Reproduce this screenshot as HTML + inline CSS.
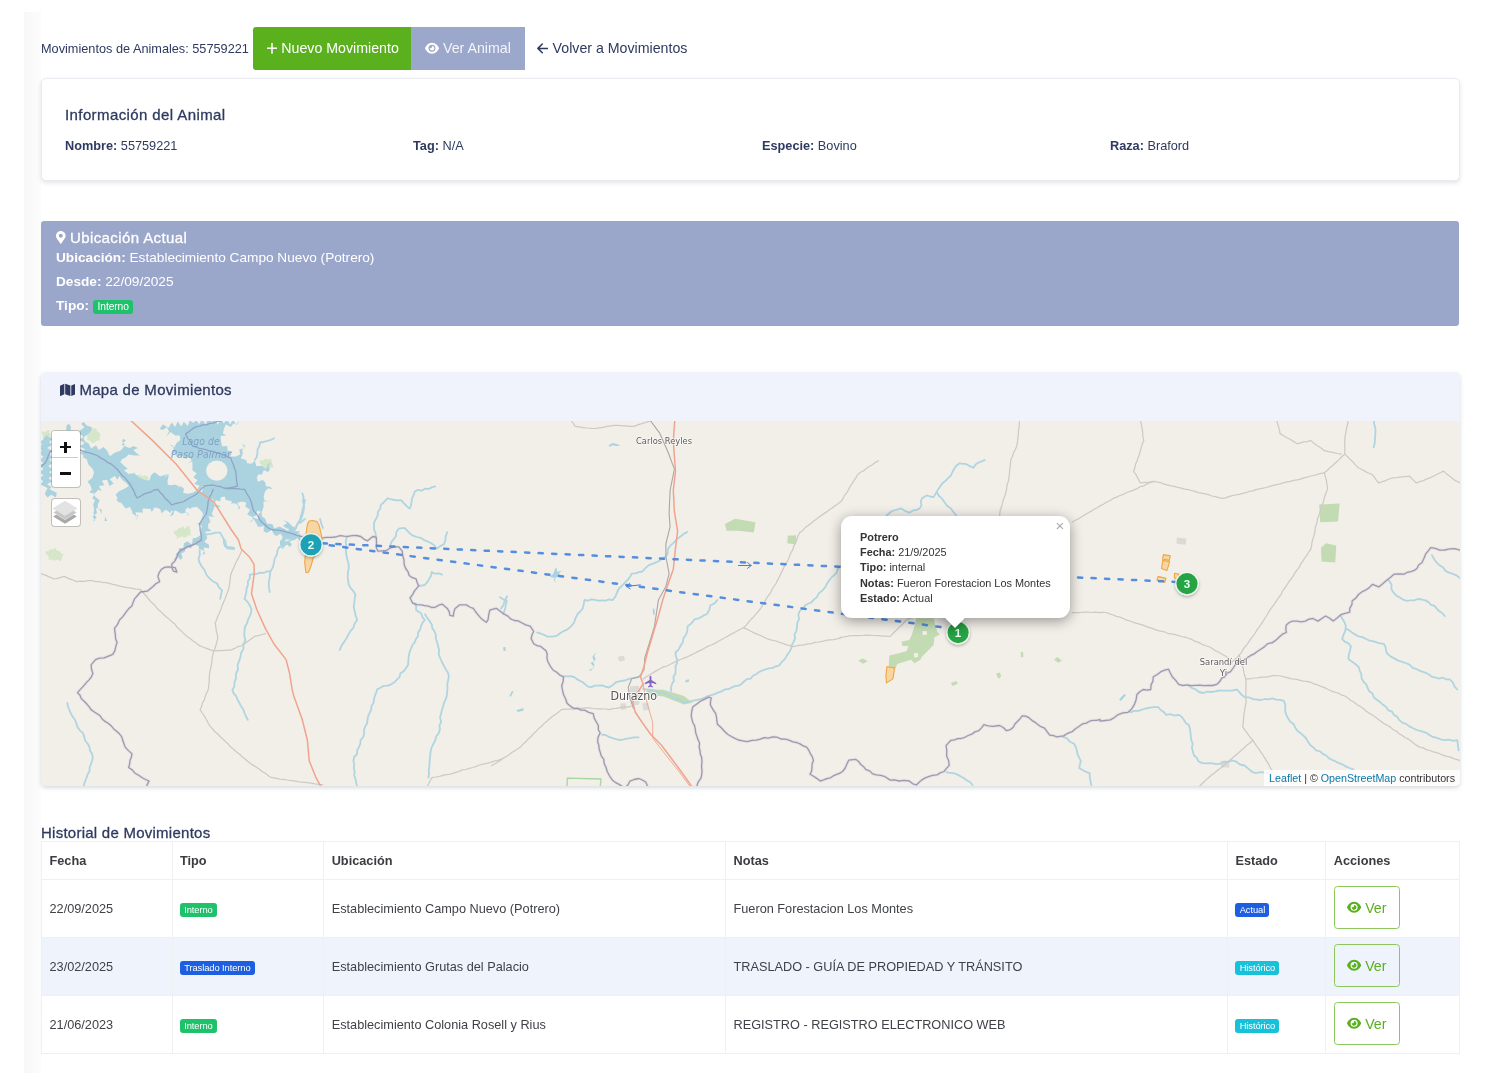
<!DOCTYPE html>
<html lang="es">
<head>
<meta charset="utf-8">
<title>Movimientos de Animales</title>
<style>
*{box-sizing:border-box}
html,body{margin:0;padding:0}
body{width:1500px;height:1086px;background:#fff;position:relative;overflow:hidden;will-change:transform;
 font-family:"Liberation Sans",Arial,sans-serif;font-size:13px;color:#2e3a5f}
.pp{font-family:"Liberation Sans",Arial,sans-serif}
.md{-webkit-text-stroke:.3px currentColor}
#shell{position:absolute;left:24px;top:12px;width:17px;height:1061px;background:linear-gradient(to right,#f8f8f9,#fcfcfd)}
.abs{position:absolute}
/* header */
#hdr-title{left:41px;top:40.500px;font-size:12.730px;line-height:16px;white-space:nowrap;color:#2e3a5f}
.btn{position:absolute;top:27px;height:43px;line-height:43px;color:#fff;white-space:nowrap;font-size:14.2px}
#b1{left:253px;width:158px;background:#5ab01d;border-radius:3px 0 0 3px}
#b2{left:411px;width:114px;background:#9ba8cb}
#b3{left:525px;width:180px;color:#2e3a5f}
/* card */
#card{left:41px;top:78px;width:1418.500px;height:103px;border:1px solid #e9ebf1;border-radius:5px;background:#fff;
 box-shadow:0 2px 4px rgba(40,50,80,.13)}
#card h5{position:absolute;left:23px;top:25.500px;margin:0;font-weight:400;font-size:15px;letter-spacing:.4px;white-space:nowrap;line-height:20px;color:#2e3a5f}
.fld{position:absolute;top:59px;line-height:16px;font-size:12.730px;white-space:nowrap}
/* ubic */
#ubic{left:41px;top:221px;width:1418px;height:105px;background:#9ba7ca;border-radius:3px;color:#fff}
#ubic .t{position:absolute;left:15px;top:7px;font-size:15px;letter-spacing:.4px;line-height:20px;white-space:nowrap}
#ubic .l{position:absolute;left:15px;font-size:13.650px;line-height:18px;white-space:nowrap}
.badge{display:inline-block;position:relative;top:.500px;font-size:9.400px;line-height:14.200px;height:14.200px;padding:0 4.200px;border-radius:3px;color:#fff;vertical-align:middle;letter-spacing:-.1px}
.g{background:#1fc16b}.b{background:#1d5fe0}.c{background:#17c1d9}
/* map card */
#mapcard{left:41px;top:372px;width:1418.500px;height:414px;border-radius:5px;background:#f0f3fb;overflow:hidden;
 box-shadow:0 2px 4px rgba(40,50,80,.18)}
#maphead{position:absolute;left:18px;top:8px;font-size:15px;letter-spacing:.3px;line-height:20px;color:#2e3a5f;white-space:nowrap}
#map{position:absolute;left:0;top:49px;width:1419px;height:365px;background:#f2efe9;overflow:hidden}

#zc{position:absolute;left:10.100px;top:9.100px;width:29.600px;height:57.600px;border:1.600px solid rgba(0,0,0,.2);border-radius:4px;background:#fff;background-clip:padding-box;overflow:hidden}
.zb{position:relative;width:26.400px;background:#fff}

.zb i{position:absolute;background:#111;display:block}
#lc{position:absolute;left:10.100px;top:76.800px;width:29.600px;height:29.700px;border:1.600px solid rgba(0,0,0,.2);border-radius:4px;background:#fff;background-clip:padding-box}
#pop{position:absolute;left:800px;top:95px;width:229px;height:102px;background:#fff;border-radius:11px;box-shadow:0 3px 13px rgba(0,0,0,.38);color:#333}
#pop .pt{position:absolute;left:19px;top:13.500px;font-size:10.900px;line-height:15.450px;white-space:nowrap}
#pop .px{position:absolute;right:4px;top:3px;width:12px;height:14px;font-size:15px;line-height:14px;color:#aaa;text-align:center}
#poptipc{position:absolute;left:896.400px;top:196.900px;width:36px;height:18px;overflow:hidden}
#poptip{position:absolute;left:11px;top:-7px;width:14px;height:14px;background:#fff;transform:rotate(45deg);box-shadow:0 3px 12px rgba(0,0,0,.38)}
#attr{position:absolute;right:0;bottom:0;height:16px;padding:0 5px 0 5px;background:rgba(255,255,255,.8);font-size:10.700px;line-height:16px;color:#333;white-space:nowrap}
/* table */
#hist{left:41px;top:823px;font-size:15px;letter-spacing:.25px;line-height:20px;color:#2e3a5f;white-space:nowrap}
table{position:absolute;left:41px;top:841px;width:1418.300px;table-layout:fixed;border-collapse:collapse;font-size:12.730px;color:#3f4247}
th,td{border:1px solid #eff0f4;padding:0 8px 0 7.500px;text-align:left;vertical-align:middle}
th{height:38px;font-weight:700;color:#3a3c40}
td{height:58px}
tr.s td{background:#eff3fc}
.ver{display:block;position:relative;top:-1px;width:66px;height:43.500px;border:1px solid #8cc65c;border-radius:3.500px;color:#5ab01d;
 line-height:42px;font-size:14.200px;white-space:nowrap}
.ic{position:absolute;display:block}
</style>
</head>
<body>
<div id="shell"></div>

<div id="hdr-title" class="abs">Movimientos de Animales: 55759221</div>
<div id="b1" class="btn pp"><svg class="ic" style="left:13.700px;top:16px" width="10" height="10.700" viewBox="0 0 10 10.700"><path d="M5 0V10.700M0 5.350H10" stroke="#fff" stroke-width="1.500" fill="none"/></svg><span style="position:absolute;left:28.300px">Nuevo Movimiento</span></div>
<div id="b2" class="btn pp"><svg class="ic" style="left:14px;top:15.200px" width="14" height="12.440" viewBox="0 0 576 512"><path fill="#fff" d="M288 32c-80.800 0-145.500 36.800-192.600 80.600C48.600 156 17.300 208 2.500 243.700c-3.300 7.900-3.300 16.700 0 24.600C17.300 304 48.600 356 95.400 399.400C142.500 443.200 207.200 480 288 480s145.500-36.800 192.600-80.600c46.800-43.500 78.100-95.400 93-131.100c3.300-7.900 3.300-16.700 0-24.600c-14.900-35.700-46.200-87.700-93-131.100C433.500 68.800 368.800 32 288 32zM144 256a144 144 0 1 1 288 0 144 144 0 1 1-288 0zm144-64c0 35.300-28.700 64-64 64c-7.100 0-13.900-1.200-20.300-3.300c-5.500-1.800-11.900 1.600-11.700 7.400c.3 6.900 1.300 13.800 3.200 20.700c13.700 51.200 66.400 81.600 117.600 67.900s81.600-66.400 67.900-117.600c-11.100-41.500-47.800-69.400-88.600-71.100c-5.800-.2-9.200 6.100-7.400 11.700c2.100 6.400 3.300 13.200 3.300 20.300z"/></svg><span style="position:absolute;left:32px;color:rgba(255,255,255,.88)">Ver Animal</span></div>
<div id="b3" class="btn pp"><svg class="ic" style="left:12.400px;top:16px" width="11" height="11" viewBox="0 0 11 11"><path d="M10.600 5.400H1M5.300 1L.900 5.400L5.300 9.800" stroke="#2e3a5f" stroke-width="1.500" fill="none" stroke-linecap="round" stroke-linejoin="round"/></svg><span style="position:absolute;left:27.600px">Volver a Movimientos</span></div>

<div id="card" class="abs">
 <h5 class="pp md">Información del Animal</h5>
 <div class="fld" style="left:23px"><b>Nombre:</b> 55759221</div>
 <div class="fld" style="left:371px"><b>Tag:</b> N/A</div>
 <div class="fld" style="left:720px"><b>Especie:</b> Bovino</div>
 <div class="fld" style="left:1068px"><b>Raza:</b> Braford</div>
</div>

<div id="ubic" class="abs">
 <svg class="ic" style="left:15px;top:10.300px" width="9.600" height="12.800" viewBox="0 0 384 512"><path fill="#fff" d="M172.268 501.670C26.970 291.031 0 269.413 0 192 0 85.961 85.961 0 192 0s192 85.961 192 192c0 77.413-26.970 99.031-172.268 309.670-9.535 13.774-29.930 13.773-39.464 0zM192 272c44.183 0 80-35.817 80-80s-35.817-80-80-80-80 35.817-80 80 35.817 80 80 80z"/></svg><div class="t pp md"><span style="margin-left:14px">Ubicación Actual</span></div>
 <div class="l" style="top:28px"><b>Ubicación:</b> Establecimiento Campo Nuevo (Potrero)</div>
 <div class="l" style="top:52px"><b>Desde:</b> 22/09/2025</div>
 <div class="l" style="top:76px"><b>Tipo:</b> <span class="badge g" style="font-size:10.250px;height:14.700px;line-height:14.700px;padding:0 4.700px">Interno</span></div>
</div>

<div id="mapcard" class="abs">
 <svg class="ic" style="left:18.600px;top:11.300px" width="15.600" height="13.870" viewBox="0 0 576 512"><path fill="#2e3a5f" d="M0 117.660v346.320c0 11.320 11.430 19.060 21.940 14.860L160 416V32L20.120 87.950A32.006 32.006 0 0 0 0 117.660zM192 416l192 64V96L192 32v384zM554.060 33.160L416 96v384l139.880-55.950A31.996 31.996 0 0 0 576 394.340V48.020c0-11.320-11.430-19.060-21.940-14.860z"/></svg><div id="maphead" class="pp md"><span style="margin-left:20.400px">Mapa de Movimientos</span></div>
 <div id="map"><!--MAPSVG--><svg width="1419" height="365" viewBox="0 0 1419 365" style="position:absolute;left:0;top:0">
<rect width="1419" height="365" fill="#f2efe9"/>
<g fill="#c3dbb3"><path d="M875.3 197.2 L892.6 197.2 L896.1 210.2 L898.7 213.7 L893.5 216.3 L892.6 224.1 L887.4 229.3 L883.9 232.7 L880.5 236.2 L879.6 238.8 L873.5 242.3 L870.1 238.8 L856.2 243.1 L854.5 247.5 L847.5 247.5 L848.4 234.5 L858.8 231.9 L865.7 230.1 L867.5 224.9 L861.4 224.9 L860.5 220.6 L868.3 218.9 L870.9 213.7 L873.5 205.0Z"/><path d="M683.9 102.9 L694.1 97.8 L714.5 101.2 L712.8 111.4 L697.5 109.7 L685.6 109.7Z"/><path d="M746.9 114.8 L755.4 114.2 L754.7 123.4 L746.2 122.3Z"/><path d="M817.2 239.7 L821.5 237.6 L826.7 240.0 L822.4 242.8Z"/><path d="M909.9 261.9 L915.5 260.1 L916.9 262.5 L911.7 265.1Z"/><path d="M955.0 252.7 L958.8 251.5 L960.2 255.3 L957.6 258.0Z"/><path d="M979.6 231.0 L982.0 230.7 L982.4 235.9 L980.1 236.2Z"/><path d="M1013.1 238.8 L1016.5 235.9 L1020.9 239.7 L1017.4 241.7Z"/><path d="M605.5 268.2 L622.5 268.8 L643.0 275.0 L651.5 281.8 L643.0 283.5 L622.5 275.6 L605.5 273.3Z"/><path d="M1278.2 83.5 L1298.7 82.5 L1297.0 100.5 L1279.2 101.2Z"/><path d="M1279.9 126.8 L1285.0 122.3 L1295.3 124.4 L1294.2 141.4 L1280.6 140.4Z"/></g>
<g fill="#d6e6c9"><path d="M4.1 130.2 L7.0 130.2 L9.2 128.3 L12.1 128.6 L14.3 126.8 L15.6 129.5 L18.7 130.1 L20.2 132.5 L22.8 133.6 L21.0 135.5 L20.8 138.2 L19.4 140.4 L16.7 138.5 L13.5 139.7 L10.6 138.4 L7.5 138.7 L7.7 135.3 L5.0 133.1Z"/><path d="M140.4 108.0 L143.6 107.8 L146.0 105.6 L148.9 104.6 L148.3 107.4 L150.0 109.7 L149.2 112.4 L150.6 114.8 L147.5 113.9 L145.0 116.2 L142.1 116.5 L142.1 113.6 L140.8 110.9Z"/><path d="M218.8 39.9 L221.8 40.0 L224.7 38.8 L227.8 39.2 L230.7 38.2 L230.5 41.2 L231.9 43.8 L232.4 46.7 L229.3 46.6 L226.4 47.7 L223.3 46.8 L220.5 48.4 L221.2 45.3 L219.1 42.8Z"/><path d="M45.7 8.3 L48.8 8.7 L51.9 7.4 L55.0 7.4 L56.7 10.8 L59.7 13.0 L58.7 16.2 L58.7 19.5 L55.9 19.5 L53.8 21.5 L51.3 22.3 L49.0 19.7 L45.7 18.6 L46.6 16.0 L45.4 13.5 L46.9 10.9Z"/><path d="M0.9 10.2 L3.8 10.9 L6.5 9.5 L9.3 9.3 L8.3 12.2 L10.0 14.9 L10.2 17.7 L7.4 16.5 L4.6 17.8 L1.8 17.7 L2.3 15.1 L1.0 12.7Z"/><path d="M97.9 54.1 L100.7 54.9 L103.6 54.4 L106.3 55.0 L108.2 58.7 L104.4 59.0 L101.7 61.5 L97.9 58.7Z"/><path d="M132.5 109.9 L135.5 109.6 L137.6 107.1 L140.5 106.5 L142.9 104.7 L142.8 107.7 L145.4 109.3 L146.3 111.7 L143.1 112.4 L141.3 115.4 L138.1 116.2 L135.9 118.6 L136.0 115.2 L133.4 112.9Z"/><path d="M219.1 38.9 L221.9 39.5 L224.3 37.7 L227.1 38.8 L229.5 37.1 L228.7 40.3 L230.9 42.9 L231.3 45.8 L228.5 45.2 L226.1 46.8 L223.3 46.3 L220.9 47.5 L221.7 44.4 L219.5 41.8Z"/></g>
<g fill="#dcdad6"><path d="M576.7 235.9 L582.8 234.6 L584.1 239.4 L578.1 240.6Z"/><path d="M589.0 265.6 L597.7 264.7 L600.3 273.5 L597.7 284.0 L591.6 284.0 L588.1 277.0Z"/><path d="M601.2 282.2 L607.3 281.9 L608.6 288.9 L602.6 289.6Z"/><path d="M579.3 282.6 L584.6 282.2 L585.1 288.3 L579.9 288.9Z"/><path d="M1135.8 116.5 L1145.3 117.6 L1144.7 123.7 L1135.5 122.7Z"/><path d="M1179.4 339.7 L1187.9 339.7 L1188.6 346.5 L1180.1 346.5Z"/></g>
<g fill="#aad3df"><path d="M-1.0 20.5 L1.8 19.1 L4.6 14.9 L8.3 13.0 L10.7 12.1 L5.7 15.1 L11.5 18.1 L8.2 21.1 L11.0 24.1 L6.2 27.1 L11.6 30.1 L8.5 33.1 L11.1 36.1 L8.5 39.1 L11.5 42.1 L7.2 45.1 L11.2 48.2 L8.3 51.2 L11.4 54.2 L7.5 57.2 L11.6 60.2 L5.9 63.2 L10.7 66.2 L8.3 68.1 L12.1 69.9 L15.8 71.8 L14.9 76.5 L10.2 73.7 L6.5 76.5 L3.7 72.7 L6.6 67.1 L0.9 64.3 L-1.0 63.4 L2.2 60.3 L-1.7 57.3 L2.5 54.2 L-1.8 51.1 L2.5 48.1 L-1.6 45.0 L2.4 41.9 L-1.7 38.9 L2.5 35.8 L-1.5 32.7 L0.9 29.7 L-1.9 26.6 L1.0 23.5Z"/><path d="M25.1 9.3 L25.6 4.6 L27.9 2.7 L29.8 5.5 L29.8 9.3Z"/><path d="M39.1 9.3 L43.4 6.5 L40.1 2.7 L42.9 0.9 L45.7 4.6 L51.3 6.5 L49.4 11.1 L45.7 13.9 L42.5 16.6 L43.8 20.5 L47.5 22.3 L50.2 27.5 L55.0 24.2 L57.8 28.9 L62.5 26.1 L66.2 29.8 L68.8 35.3 L73.7 31.7 L79.3 29.8 L82.1 27.0 L83.7 23.4 L81.1 20.5 L82.1 17.7 L84.9 19.5 L80.4 23.5 L85.8 26.1 L88.6 27.0 L92.3 25.1 L97.0 27.0 L92.3 28.9 L95.1 31.7 L98.9 34.5 L93.3 34.5 L87.7 33.5 L84.9 36.3 L81.1 38.2 L79.3 41.0 L83.0 44.7 L86.7 47.5 L83.0 49.4 L87.7 53.1 L92.3 52.2 L97.0 55.0 L101.7 53.1 L97.3 54.2 L97.9 58.7 L96.3 63.9 L101.7 64.3 L106.4 64.4 L106.3 59.7 L111.2 59.0 L111.0 54.1 L113.8 51.3 L118.5 55.0 L123.1 56.9 L127.8 53.1 L126.9 58.7 L125.0 63.2 L129.7 64.3 L134.3 63.4 L139.0 66.2 L135.7 69.5 L139.8 72.7 L135.4 76.0 L139.5 79.3 L136.7 82.5 L139.8 85.8 L134.1 89.1 L139.0 92.3 L139.7 87.0 L134.3 87.7 L130.0 88.0 L129.7 92.3 L125.0 88.6 L120.3 92.3 L119.5 88.3 L115.7 86.7 L110.0 86.7 L111.0 92.3 L111.1 87.6 L106.3 87.7 L101.5 87.5 L101.7 92.3 L97.0 88.6 L92.8 91.3 L94.2 96.1 L94.9 92.2 L91.4 90.5 L88.6 85.8 L84.9 87.7 L81.1 83.0 L77.4 78.3 L74.6 73.7 L78.3 69.9 L83.0 68.1 L87.7 65.3 L85.8 62.5 L81.1 58.7 L78.3 55.0 L76.5 58.7 L73.7 55.0 L68.7 58.2 L72.7 62.5 L68.7 64.8 L70.9 69.0 L68.1 64.3 L66.2 58.7 L60.8 59.5 L63.4 64.3 L57.8 65.0 L60.6 69.9 L57.1 68.7 L54.5 71.9 L51.3 71.8 L55.0 76.5 L58.7 79.3 L56.9 83.0 L56.6 87.3 L60.6 88.6 L60.6 93.3 L64.3 96.1 L66.2 100.0 L63.4 100.0 L64.3 95.7 L60.6 93.3 L58.7 88.6 L55.0 86.7 L55.9 92.3 L51.5 95.3 L54.1 100.0 L52.2 100.0 L55.6 96.4 L52.4 92.4 L53.1 88.6 L52.2 83.0 L54.1 79.3 L51.3 77.4 L53.8 72.6 L48.5 71.8 L50.8 68.3 L49.4 64.3 L46.6 60.6 L51.3 56.9 L53.1 51.3 L51.3 47.5 L47.5 43.8 L45.7 38.2 L41.9 36.3 L39.6 38.2 L42.8 34.9 L39.0 31.8 L44.4 28.5 L38.6 25.4 L43.8 22.1 L38.5 18.9 L42.5 15.6 L38.2 12.5Z"/><path d="M75.3 78.7 L77.8 76.2 L77.0 72.7 L82.1 75.6 L82.5 69.2 L85.7 68.3 L89.3 66.4 L87.1 62.2 L92.4 61.0 L89.6 56.5 L95.8 55.6 L92.6 51.0 L93.4 55.4 L97.8 56.2 L103.0 58.8 L108.4 59.7 L109.9 54.5 L113.4 51.0 L111.3 56.2 L116.9 56.2 L122.1 54.5 L127.3 52.7 L123.8 55.8 L126.4 59.7 L126.9 64.2 L130.7 66.6 L135.9 69.2 L139.7 65.6 L135.1 63.1 L139.4 64.9 L142.9 67.5 L142.2 71.7 L146.3 72.7 L151.5 71.8 L155.9 69.2 L161.0 72.1 L161.9 65.7 L165.4 64.9 L167.7 69.0 L172.3 68.3 L167.7 71.8 L173.0 75.3 L169.9 78.7 L172.7 82.2 L169.1 85.7 L172.3 89.1 L166.5 90.2 L167.1 96.1 L164.1 93.1 L161.1 96.1 L162.0 92.2 L159.3 89.1 L155.9 85.7 L150.0 86.7 L150.7 92.6 L150.2 88.3 L146.3 86.5 L143.8 90.0 L147.5 92.8 L147.2 96.1 L145.9 91.2 L140.3 92.8 L137.7 90.0 L133.4 89.4 L132.3 94.1 L129.0 95.2 L132.0 90.1 L125.8 89.6 L124.7 86.5 L119.5 89.1 L120.5 84.6 L115.3 83.7 L114.3 80.5 L111.0 83.2 L112.8 87.7 L110.8 90.9 L108.9 86.2 L103.9 85.7 L99.7 86.9 L100.4 91.5 L94.1 91.2 L96.7 97.1 L94.3 99.5 L97.5 94.6 L91.5 92.8 L90.9 89.1 L89.6 83.0 L83.9 85.7 L82.5 81.6 L77.8 81.5Z"/><path d="M118.6 7.7 L122.1 3.3 L127.3 7.0 L130.7 1.6 L134.1 6.0 L136.8 0.5 L140.2 5.4 L142.9 0.7 L146.6 5.1 L148.9 -0.7 L152.3 2.0 L155.0 -1.0 L158.1 3.0 L161.2 -1.7 L164.3 3.2 L167.4 -1.9 L170.5 0.8 L173.6 -1.6 L176.7 3.8 L179.8 -1.4 L182.9 2.3 L186.0 -1.8 L189.0 3.6 L192.1 -1.7 L195.2 3.9 L198.3 -1.0 L196.6 3.3 L192.4 2.6 L189.7 5.9 L184.8 3.5 L182.7 8.5 L182.0 12.4 L185.3 14.6 L179.6 15.0 L180.1 20.7 L181.3 25.5 L186.2 25.0 L186.7 29.7 L191.4 30.2 L189.2 35.4 L194.9 35.4 L199.3 33.3 L198.3 28.5 L203.6 27.1 L200.9 22.4 L204.4 25.0 L201.3 28.3 L201.8 32.8 L199.8 37.6 L205.3 38.9 L206.1 42.3 L210.6 42.7 L213.9 39.7 L215.3 45.1 L220.9 44.9 L225.1 48.0 L227.1 42.6 L230.4 42.3 L227.3 44.5 L229.0 48.5 L226.9 51.0 L222.9 48.9 L220.8 53.5 L217.4 53.6 L215.7 56.2 L216.9 60.7 L221.8 59.0 L224.3 61.4 L225.0 65.3 L229.3 65.7 L231.3 68.3 L227.3 67.2 L224.3 70.1 L222.6 75.3 L223.5 79.6 L227.8 80.5 L222.5 80.4 L222.6 85.7 L220.9 90.9 L216.2 89.8 L214.7 94.8 L211.3 96.1 L206.1 93.5 L209.0 88.7 L204.4 85.7 L205.1 81.5 L200.9 80.5 L196.0 81.9 L199.3 86.5 L197.5 89.1 L197.5 84.8 L194.0 82.2 L190.4 82.4 L188.8 85.7 L191.0 80.2 L184.8 79.0 L183.6 75.3 L179.7 76.5 L179.3 80.5 L175.3 79.3 L172.3 82.2 L172.6 78.6 L169.0 76.9 L170.5 72.7 L166.1 71.5 L165.4 68.3 L161.9 64.7 L159.1 69.7 L155.9 69.2 L158.5 64.5 L153.3 63.1 L156.4 59.2 L152.4 56.2 L155.7 52.4 L151.3 49.3 L151.5 45.8 L151.3 40.6 L146.3 42.3 L150.7 39.7 L148.4 36.1 L144.6 38.0 L140.8 34.7 L135.9 36.3 L134.4 32.0 L129.9 32.8 L132.5 28.5 L132.1 24.5 L128.1 24.1 L133.2 26.3 L135.9 21.5 L139.4 18.9 L138.7 14.5 L134.2 14.6 L129.5 10.9 L125.5 15.5 L128.1 10.3 L125.8 6.4 L121.6 9.0Z"/><path d="M220.9 90.9 L220.8 95.2 L224.3 97.8 L226.1 102.7 L231.3 103.0 L233.4 107.5 L238.4 105.5 L241.7 107.3 L247.3 110.0 L248.6 103.9 L252.1 106.5 L254.5 110.2 L259.0 109.9 L256.6 113.4 L260.0 116.9 L259.0 120.3 L256.3 117.0 L252.6 119.6 L249.5 118.6 L244.2 118.6 L245.1 123.8 L241.7 128.1 L239.1 125.5 L235.6 126.4 L241.7 126.2 L239.9 120.3 L241.7 116.0 L239.5 112.6 L235.7 115.0 L233.0 113.4 L230.6 109.1 L225.8 111.9 L222.6 109.9 L222.9 105.0 L217.3 106.0 L215.7 103.0 L212.7 98.0 L207.9 101.3 L211.7 100.0 L211.3 96.1 L216.7 98.3 L217.5 92.2Z"/><path d="M172.3 82.2 L175.2 86.3 L180.1 85.7 L174.4 83.2 L172.3 89.1 L170.6 92.9 L173.2 96.1 L167.5 95.2 L169.5 101.0 L167.1 103.0 L167.2 107.3 L170.6 109.9 L164.2 110.8 L166.3 116.9 L163.5 120.9 L168.0 123.7 L168.0 127.3 L162.5 126.4 L164.0 132.5 L161.1 134.2 L163.3 129.8 L158.0 128.1 L157.6 124.7 L152.9 123.6 L149.8 127.3 L144.9 125.8 L143.7 130.7 L140.2 132.4 L141.7 136.7 L139.4 139.1 L135.9 134.5 L132.5 139.1 L136.4 137.3 L134.7 133.0 L138.1 131.0 L137.7 127.3 L142.2 127.1 L143.1 122.2 L146.3 120.3 L150.9 123.4 L151.8 117.2 L155.0 116.9 L159.0 114.6 L159.3 109.9 L161.0 104.8 L155.9 103.0 L160.1 100.8 L161.1 96.1 L165.2 94.8 L165.1 90.1 L169.6 89.2 L169.3 84.4Z"/><path d="M239.0 107.0 L244.0 108.0 L246.3 113.4 L251.0 110.0 L254.1 114.7 L259.0 112.0 L259.0 116.0 L255.5 111.5 L251.0 115.0 L248.0 111.2 L244.0 114.0 L239.0 113.0 L242.0 110.0Z"/><path d="M242.0 99.0 L247.0 101.0 L251.0 105.0 L255.0 107.0 L253.0 110.0 L251.2 105.5 L247.0 108.0 L242.0 105.0 L246.0 102.0Z"/><path d="M239.0 119.0 L242.8 121.4 L247.0 120.0 L251.0 123.0 L249.0 126.0 L246.3 123.5 L243.0 125.0 L239.0 124.0Z"/><path d="M547.8 249.0 L553.4 246.6 L549.6 242.0 L553.1 240.0 L551.3 235.9 L553.1 233.2 L555.7 231.5 L553.1 234.7 L554.8 238.5 L552.2 240.9 L553.5 244.4 L552.2 247.2 L549.6 249.9Z"/><path d="M462.1 226.2 L464.4 225.9 L464.7 229.7 L462.6 230.1Z"/><path d="M468.2 275.2 L470.9 270.0 L472.6 270.3 L470.0 275.6Z"/><path d="M475.2 289.2 L482.2 287.1 L482.6 289.6 L477.0 291.0Z"/><path d="M644.1 259.8 L647.6 258.1 L648.1 260.4 L644.9 261.6Z"/><path d="M611.7 187.7 L613.5 187.4 L613.8 193.3 L612.1 193.7Z"/><path d="M508.6 155.8 L512.2 153.0 L513.9 148.3 L515.6 146.2 L516.1 150.9 L520.3 149.4 L517.8 153.0 L521.4 155.8 L516.5 155.8 L512.4 158.2 L515.0 162.2 L513.5 156.9Z"/><path d="M567.7 24.2 L571.5 22.0 L575.8 22.9 L579.6 24.6 L575.8 25.0 L571.5 24.2 L568.3 25.9Z"/><path d="M1078.1 278.6 L1083.2 273.0 L1085.0 274.0 L1079.9 280.1Z"/></g>
<g fill="#f2efe9"><path d="M186.5 49.6 L185.7 53.5 L183.4 56.7 L179.9 58.9 L175.8 59.7 L171.7 58.9 L168.2 56.7 L165.9 53.5 L165.1 49.6 L165.9 45.8 L168.2 42.5 L171.7 40.3 L175.8 39.6 L179.9 40.3 L183.4 42.5 L185.7 45.8Z"/><path d="M881.3 210.2 L885.7 209.9 L886.0 213.7 L881.7 214.0Z"/><path d="M872.7 232.4 L876.7 231.7 L877.3 235.9 L873.2 236.5Z"/></g>
<g fill="none" stroke="#afd5e1" stroke-linejoin="round" stroke-linecap="round" ><path d="M255.0 107.0 L256.5 102.8 L259.0 99.0 L259.9 95.0 L261.1 91.0 L262.0 87.0 L263.1 83.0 L264.0 79.0" stroke-width="1.8"/><path d="M259.0 102.0 L264.0 98.0" stroke-width="1.8"/><path d="M279.0 98.0 L280.3 102.6 L282.0 107.0" stroke-width="1.8"/><path d="M334.6 116.5 L334.7 112.5 L333.1 108.6 L332.9 104.6 L333.3 101.0 L335.1 97.8 L336.7 94.5 L336.9 90.8 L339.3 87.8 L339.7 84.2 L343.2 80.8 L346.5 77.4 L351.0 78.5 L355.5 79.4 L360.1 79.1 L362.7 82.1 L365.6 85.0 L368.7 87.6 L370.1 84.3 L370.5 80.7 L371.2 77.2 L372.6 73.9 L373.8 70.5 L377.0 68.8 L380.8 69.7 L383.9 67.7 L387.6 68.0 L390.8 66.4 L394.2 65.4" stroke-width="1.8"/><path d="M349.1 125.0 L350.3 121.3 L352.6 118.1 L355.1 115.0 L355.4 110.8 L357.8 107.7 L363.0 106.8 L366.0 109.3 L368.6 112.2 L371.7 114.6 L376.0 116.0 L380.3 117.2 L384.5 119.7 L389.0 121.5 L392.9 124.1 L395.9 127.6 L399.2 125.1 L402.9 123.3 L404.4 119.3 L404.7 115.1 L406.3 111.1" stroke-width="1.8"/><path d="M378.6 164.9 L383.8 164.0 L386.3 161.2 L388.1 157.9 L390.1 154.7 L390.7 151.0 L394.0 152.7 L397.8 152.3 L401.1 153.6" stroke-width="1.8"/><path d="M305.8 116.3 L304.7 120.9 L305.3 125.6 L304.9 130.2 L305.4 134.3 L306.3 138.4 L307.5 142.3 L307.8 147.0 L306.9 151.6 L306.7 156.2 L307.1 159.8 L307.7 163.3 L309.3 166.6 L312.2 169.9 L314.5 173.5 L313.7 177.6 L313.4 181.6 L312.7 185.7 L313.7 190.2 L314.7 194.7 L316.2 199.0 L313.6 202.6 L312.4 206.8 L309.5 209.8 L307.6 213.4 L305.6 217.0 L303.2 220.9 L300.5 224.6 L298.8 229.0" stroke-width="1.8"/><path d="M261.3 72.3 L262.6 76.0 L262.0 79.9 L262.8 83.7 L263.0 87.6 L262.2 91.2 L261.2 94.7 L260.0 98.1 L257.9 101.2 L255.6 104.6 L254.2 108.5 L251.1 111.4" stroke-width="1.8"/><path d="M250.3 119.0 L245.8 121.2 L241.7 124.2 L238.4 126.1 L236.5 129.4 L235.9 133.6 L233.7 137.4 L233.0 141.5 L231.9 146.1 L229.5 150.2 L226.0 150.5 L222.7 151.9 L219.0 151.6 L215.7 152.8 L208.7 153.7 L208.9 157.3 L206.9 160.5 L207.0 164.1 L205.5 167.4 L205.4 171.0 L204.4 174.5 L203.5 177.9 L206.6 180.9 L208.8 184.4 L210.5 188.3 L210.0 192.0 L208.7 195.5 L207.0 198.7 L206.1 202.3 L204.1 205.5 L203.5 209.1 L203.3 214.4 L204.4 219.5 L202.3 223.3 L202.4 227.9 L200.1 231.7 L199.5 235.9 L198.2 239.9 L196.6 243.8 L197.0 248.5 L194.9 253.0 L194.9 257.7 L193.4 261.3 L193.4 265.4 L191.4 268.9 L192.6 272.5 L195.3 275.2 L196.5 278.7 L198.4 281.9 L200.0 285.2 L202.2 288.3 L203.5 291.9 L205.0 295.5 L206.8 298.8" stroke-width="1.8"/><path d="M229.5 150.2 L228.9 153.7 L228.6 157.2 L227.8 160.6 L227.8 165.8 L228.7 171.0" stroke-width="1.8"/><path d="M182.7 119.0 L183.0 122.6 L184.5 125.9 L188.8 126.1 L193.1 126.8" stroke-width="1.8"/><path d="M158.5 129.4 L158.9 133.4 L157.6 137.5 L158.5 141.5 L160.8 145.6 L163.7 149.3 L165.4 153.7 L168.3 157.2 L171.7 160.2 L175.8 162.3 L177.9 166.2 L181.0 169.3 L180.0 173.6 L179.3 177.9" stroke-width="1.8"/><path d="M373.4 182.2 L375.1 185.5 L375.1 189.1 L380.3 192.6 L381.4 196.2 L383.8 199.0 L381.5 201.8 L380.1 205.0 L379.2 208.5 L377.1 211.4 L376.9 215.2 L374.9 218.1 L373.6 221.4 L371.4 224.2 L370.1 227.5 L368.7 230.7 L367.7 235.2 L367.4 239.7 L367.0 244.3 L364.8 247.3 L362.7 250.2 L359.5 252.3 L358.5 256.1 L355.8 258.7 L353.3 261.3 L350.2 263.3 L346.8 264.7 L342.8 264.8 L339.6 266.7 L336.3 268.2 L335.2 271.5 L333.9 274.9 L332.9 278.3 L332.5 281.9 L330.4 284.9 L330.2 288.6 L328.7 291.9 L327.2 295.1 L326.5 298.6 L326.1 302.2 L324.3 305.4 L323.0 308.8 L323.2 312.6 L322.2 316.1 L319.6 319.0 L319.3 322.7 L317.9 326.1 L316.2 329.4 L316.0 333.2 L313.2 336.0 L312.4 339.7 L313.2 343.3 L312.7 347.1 L313.7 350.7 L313.2 354.5 L314.5 358.0 L315.2 361.7 L316.1 365.3 L315.9 369.0" stroke-width="1.8"/><path d="M384.0 193.2 L386.1 196.7 L388.6 200.0 L390.8 203.4 L391.2 207.0 L393.3 210.1 L394.8 213.4 L394.8 217.1 L395.9 220.5 L397.0 224.7 L398.1 228.9 L397.7 233.4 L399.3 237.5 L400.9 241.0 L402.7 244.3 L404.4 247.7 L406.6 250.9 L407.8 254.5 L407.3 258.8 L406.3 263.0 L406.5 267.3 L406.1 271.6 L405.7 275.1 L404.6 278.5 L403.0 281.8 L402.2 285.2 L401.0 288.6 L400.1 292.5 L399.0 296.4 L400.2 300.7 L398.5 304.5 L398.9 308.6 L397.6 312.4 L395.2 315.5 L394.3 319.3 L392.5 322.6 L390.8 326.1 L389.7 329.8 L389.3 333.7 L388.9 337.5 L388.6 341.3 L388.4 345.2 L387.6 349.0 L388.1 352.9 L387.4 356.7" stroke-width="1.8"/><path d="M26.3 281.8 L27.0 285.4 L28.3 288.8 L29.8 292.1 L31.4 295.4 L33.9 298.5 L35.3 302.2 L36.5 306.1 L38.9 309.3 L42.0 312.1 L43.3 315.9 L44.1 319.5 L46.5 322.5 L48.4 325.7 L48.9 329.5 L51.0 332.6 L51.8 336.3 L51.0 339.8 L50.0 343.2 L48.5 346.5 L48.6 350.2 L46.7 353.3 L45.3 357.2 L43.8 361.1 L42.7 365.0 L41.6 369.0" stroke-width="1.8"/><path d="M460.1 187.4 L462.4 184.2 L463.5 180.5 L466.1 175.3" stroke-width="1.8"/><path d="M213.9 38.9 L215.9 35.7 L216.4 32.0 L216.6 28.3 L218.4 25.1 L219.1 21.5 L222.8 21.0 L226.2 19.9 L229.7 19.0 L233.0 17.2" stroke-width="1.8"/><path d="M165.4 113.4 L170.0 112.9 L174.6 111.6 L179.3 111.7 L181.6 116.2 L184.5 120.3 L184.9 123.9 L186.2 127.3 L193.1 128.1" stroke-width="1.8"/><path d="M496.2 211.4 L499.8 212.7 L503.4 214.0 L506.7 215.7 L511.1 215.6 L515.5 214.9 L518.8 212.5 L522.2 210.3 L526.0 208.7 L529.8 205.6 L533.0 201.7 L534.5 197.3 L536.5 193.0 L539.2 190.5 L541.7 187.7 L542.7 183.4 L543.5 179.0 L547.0 179.6 L550.5 178.3 L554.0 178.9 L557.5 179.6 L561.0 179.3 L564.5 179.7 L568.0 178.3 L571.5 179.1 L574.4 175.6 L576.0 171.5 L577.9 167.5 L581.3 164.5 L584.3 161.1 L586.9 158.6 L589.1 155.8 L590.7 152.6 L594.4 152.4 L597.8 151.2 L601.4 150.5 L604.5 147.1 L607.8 144.1 L611.5 142.9 L615.0 141.4 L618.5 139.8 L621.4 137.3 L624.9 135.5 L626.7 132.2 L626.9 128.1 L629.1 124.9 L632.5 121.9 L635.5 118.5 L639.8 115.3 L642.8 112.9 L646.2 111.0" stroke-width="1.8"/><path d="M799.7 145.5 L796.7 147.7 L795.7 151.6 L793.1 154.2 L790.4 156.7 L788.1 159.5 L786.1 162.5 L784.1 166.4 L781.3 169.6 L777.8 172.3 L775.9 176.2 L773.0 178.4 L770.6 181.2 L767.2 182.8 L763.9 184.5 L761.9 187.8 L758.8 189.8 L757.3 193.7 L758.1 198.1 L756.2 202.0 L756.0 206.1 L755.4 210.2 L753.5 213.4 L754.1 217.4 L752.7 220.7 L750.9 223.9 L750.3 227.4 L748.6 230.7 L746.0 234.1 L744.0 237.9 L740.9 240.8 L738.4 244.3 L734.9 245.3 L731.7 246.9 L728.0 247.4 L724.6 248.3 L721.2 249.5 L717.9 251.1 L715.1 253.2 L711.9 254.7 L709.6 257.7 L705.8 258.2 L703.1 260.5 L700.5 262.9 L697.5 264.7 L693.9 265.2 L690.5 266.6 L687.3 268.2 L683.6 268.4 L680.4 270.4 L677.0 271.6 L673.7 273.1 L670.2 274.1 L666.7 275.0 L663.4 276.7 L660.2 278.1 L656.7 278.7 L653.2 279.3 L649.9 280.4 L646.3 280.7 L643.0 281.8 L640.0 279.2 L636.4 277.8 L632.4 277.4 L629.5 274.6 L625.5 274.1 L622.5 271.6 L618.4 271.3 L614.4 269.9 L610.4 268.9 L606.2 268.5 L602.1 268.2" stroke-width="1.8"/><path d="M943.7 39.2 L937.7 41.5 L934.5 43.5 L932.5 46.7 L928.9 45.1 L925.5 43.2 L918.6 42.3 L915.5 44.4 L913.4 47.5 L911.5 50.9 L909.9 54.5 L907.2 56.9 L904.7 59.7 L901.8 61.9 L899.5 64.9 L896.1 70.1 L892.6 76.1 L889.1 75.5 L885.7 74.4 L881.3 77.0 L879.7 80.3 L880.5 84.2 L878.7 87.4 L875.3 89.0 L871.6 89.7 L868.3 91.7 L863.9 89.8 L859.7 87.4 L855.4 88.8 L851.0 90.0 L845.8 94.3 L843.6 97.8 L841.0 100.8 L837.9 103.3 L834.4 105.4 L832.8 109.4 L830.1 112.4 L827.0 114.8 L823.9 117.1 L822.0 120.4 L819.6 123.3 L817.6 126.5 L814.4 128.7 L812.7 132.1 L809.8 134.5 L806.7 136.7 L805.1 140.3 L802.7 143.1 L799.7 145.5" stroke-width="1.8"/><path d="M896.1 71.8 L898.0 75.0 L900.9 77.4 L903.0 80.5 L905.8 84.6 L909.9 87.4 L912.4 91.0 L915.1 94.3" stroke-width="1.8"/><path d="M522.5 255.1 L526.0 255.4 L529.5 255.2 L533.0 256.0 L537.2 258.9 L541.7 261.2 L547.0 265.6 L550.5 266.1 L553.9 264.6 L557.5 264.7 L561.1 264.3 L564.5 265.7 L568.0 266.5 L571.7 264.1 L575.0 261.2 L579.3 260.2 L583.7 259.5 L588.0 257.8 L592.5 256.9 L597.7 256.0" stroke-width="1.8"/><path d="M561.0 313.7 L564.8 314.0 L568.0 315.9 L571.5 317.2 L575.8 318.3 L580.2 319.0 L584.5 317.9 L589.0 317.2 L593.3 316.3 L597.7 316.3" stroke-width="1.8"/><path d="M676.4 179.0 L673.5 182.4 L669.4 184.2 L668.3 188.9 L665.9 193.0 L661.9 194.9 L658.1 197.3 L653.7 198.2 L650.6 202.1 L646.7 205.2 L646.3 209.7 L644.9 214.0 L642.5 217.1 L641.8 221.2 L639.7 224.5 L637.7 228.4 L634.5 231.5 L634.8 235.1 L636.2 238.5 L636.1 242.0 L634.5 245.4 L634.6 248.9 L634.5 252.5 L632.4 255.7 L632.9 259.7 L631.0 263.0 L630.0 266.4 L630.1 270.0" stroke-width="1.8"/><path d="M459.0 176.2 L462.2 178.3 L465.8 179.6 L465.0 183.0 L464.4 186.4 L463.4 189.8 L462.4 193.2" stroke-width="1.8"/><path d="M1147.8 264.7 L1151.0 267.1 L1154.8 268.4 L1157.9 271.0 L1162.2 272.0 L1166.4 270.7 L1170.6 271.0 L1174.4 270.3 L1178.1 269.5 L1182.0 269.6 L1185.8 269.7 L1190.9 269.7 L1195.9 268.5 L1198.3 271.2 L1200.7 273.8 L1203.5 276.1 L1207.9 276.3 L1211.9 278.1 L1216.2 278.6 L1220.1 279.0 L1223.8 278.0 L1227.7 278.3 L1231.4 277.3 L1235.1 278.7 L1239.1 278.8 L1242.8 279.9 L1244.1 283.2 L1244.3 286.8 L1244.2 290.4 L1245.3 293.8 L1247.1 297.3 L1249.1 300.6 L1252.5 302.9 L1254.2 306.5 L1256.2 309.6 L1259.0 311.8 L1261.8 314.1 L1264.9 317.0 L1267.0 320.7 L1269.4 324.2 L1272.5 326.5 L1275.2 329.4 L1279.2 330.5 L1282.1 333.1 L1285.3 334.5 L1287.8 337.2 L1290.9 338.8 L1294.2 340.2 L1297.3 341.9 L1301.2 343.3 L1304.8 345.4 L1308.5 347.0 L1312.5 348.3" stroke-width="1.8"/><path d="M1089.5 291.3 L1093.2 289.8 L1097.3 289.9 L1101.0 288.7 L1104.7 287.5 L1108.9 286.6 L1113.1 286.2 L1117.4 286.2 L1119.7 289.0 L1122.8 290.9 L1125.0 293.8 L1129.2 293.2 L1133.4 294.5 L1137.7 293.8 L1140.7 295.8 L1142.8 298.8 L1144.7 301.9 L1147.8 303.9 L1148.9 307.7 L1149.5 311.5 L1149.8 315.3 L1150.3 319.1 L1151.7 322.8 L1150.9 326.9 L1151.9 330.6 L1152.9 334.3 L1155.6 336.6 L1157.3 340.1 L1160.5 341.9 L1164.3 342.4 L1168.1 342.2 L1171.9 342.3 L1175.7 343.2 L1179.6 342.7 L1183.1 340.7 L1187.2 341.1 L1190.9 339.4 L1195.2 340.7 L1199.0 343.5 L1203.5 344.5 L1207.3 347.6 L1211.1 350.8 L1214.9 352.1 L1218.8 351.1 L1222.6 351.3 L1226.3 352.1" stroke-width="1.8"/><path d="M1304.9 207.7 L1308.2 209.3 L1311.1 211.6 L1314.2 213.6 L1317.5 215.3 L1321.5 216.1 L1325.1 218.0 L1328.7 219.7 L1332.7 220.3 L1337.7 222.2 L1342.9 222.9 L1344.6 226.1 L1345.0 229.8 L1346.7 233.0 L1349.8 235.6 L1353.3 237.4 L1356.7 239.4 L1360.6 240.6 L1364.6 242.0 L1368.5 243.7 L1371.7 246.9 L1375.8 248.2 L1379.6 250.1 L1383.7 251.4 L1387.6 253.2 L1391.0 255.8 L1394.5 256.5 L1398.0 257.6 L1401.7 256.7 L1405.1 258.3 L1408.7 258.3 L1411.8 261.3 L1413.4 265.4 L1416.3 268.5" stroke-width="1.8"/><path d="M1299.8 195.0 L1301.6 198.3 L1303.6 201.5 L1304.9 205.1 L1304.3 209.6 L1302.6 213.7 L1301.1 217.8 L1303.7 220.7 L1307.5 222.3 L1309.9 225.4 L1309.0 229.6 L1307.8 233.7 L1307.4 238.1 L1310.8 240.6 L1314.3 243.0 L1317.5 245.7 L1318.7 249.5 L1320.3 253.2 L1320.6 257.3 L1322.6 260.9 L1325.3 263.4 L1326.6 267.0 L1328.3 270.3 L1331.5 272.5 L1332.7 276.1 L1335.8 278.7 L1339.1 281.1 L1342.1 283.8 L1345.4 286.2 L1347.3 289.4 L1351.0 290.7 L1352.9 293.9 L1356.2 295.7 L1358.1 298.9 L1361.2 301.7 L1365.1 302.9 L1368.4 305.4 L1372.1 307.3 L1375.8 309.0 L1380.2 310.2 L1384.6 311.6 L1388.5 314.1 L1392.0 316.0 L1396.0 316.8 L1399.7 318.3 L1403.7 319.1 L1407.9 318.7 L1412.1 319.9 L1416.3 319.1 L1416.9 324.2 L1417.6 329.3" stroke-width="1.8"/><path d="M1347.9 159.5 L1350.5 163.4 L1350.4 168.3 L1353.0 172.2 L1355.7 174.9 L1359.0 176.5 L1362.0 178.7 L1365.7 179.8 L1369.5 179.4 L1373.3 179.3 L1377.0 178.0 L1380.9 178.5 L1384.4 179.4 L1387.5 181.1 L1390.1 183.9 L1393.5 184.9 L1395.8 187.7 L1398.3 190.3 L1401.4 192.2 L1403.7 195.0" stroke-width="1.8"/><path d="M1391.0 134.2 L1393.0 138.0 L1395.5 141.4 L1398.6 144.3 L1402.1 146.6 L1404.8 150.1 L1408.7 151.9 L1412.4 153.1 L1415.9 154.6 L1418.9 157.0" stroke-width="1.8"/><path d="M1332.7 -1.0 L1333.3 3.5 L1334.5 8.0 L1334.4 12.6 L1334.0 17.2 L1333.8 21.8 L1332.7 26.3" stroke-width="1.8"/><path d="M1021.7 315.8 L1026.0 317.4 L1029.0 320.8 L1033.0 322.7 L1034.8 326.0 L1035.8 329.5 L1036.5 333.1 L1038.1 336.7 L1039.9 340.1 L1038.9 343.5 L1038.2 347.0 L1041.5 349.1 L1045.0 350.8 L1048.6 352.2 L1048.8 356.2 L1049.5 360.1 L1050.3 364.0" stroke-width="1.8"/><path d="M905.6 351.3 L909.5 351.8 L913.3 352.3 L916.9 353.9 L921.4 356.2 L925.5 359.1 L929.0 361.0 L931.6 364.0" stroke-width="1.8"/></g>
<g fill="none" stroke="#cdcac6" stroke-linejoin="round" stroke-linecap="round" ><path d="M1307.2 -1.0 L1306.6 3.1 L1305.6 7.1 L1305.0 11.2 L1304.1 15.3 L1303.8 19.4 L1303.7 24.0 L1303.8 28.5 L1303.8 33.1 L1306.6 35.7 L1309.1 38.6 L1312.1 41.1 L1314.5 44.1 L1317.4 46.7 L1320.8 48.5 L1324.1 50.4 L1327.5 52.0 L1331.0 53.5 L1333.4 56.2 L1335.4 59.4 L1337.8 62.0 L1341.2 60.7 L1344.7 59.6 L1348.0 58.0 L1351.5 56.9 L1355.7 56.6 L1360.0 55.9 L1364.2 55.6 L1368.5 55.2 L1371.9 58.6 L1375.3 62.0 L1378.7 60.6 L1382.2 59.6 L1385.5 58.1 L1388.9 56.9 L1392.3 55.2 L1395.7 53.5 L1399.1 51.7 L1402.6 50.1 L1405.8 53.1 L1409.4 55.8 L1412.8 58.6 L1416.1 60.5 L1419.6 62.0" stroke-width="1.25"/><path d="M529.9 -1.0 L532.1 2.2 L534.2 5.4 L538.2 5.9 L542.3 6.6 L546.3 7.0 L550.4 7.3 L554.5 7.5 L558.3 6.8 L562.1 6.3 L565.9 5.4 L569.8 4.8 L573.7 4.3 L577.5 4.3 L581.3 4.9 L585.2 4.9 L589.0 5.3 L592.9 5.4 L596.8 3.8 L600.8 2.6 L604.8 1.3 L608.9 0.1" stroke-width="1.25"/><path d="M-2.7 151.9 L0.7 152.8 L4.8 154.4 L8.9 156.1 L12.9 158.0 L16.4 157.3 L19.8 156.3 L23.3 155.4 L27.2 157.4 L31.4 158.8 L35.4 160.6 L39.3 160.2 L43.2 160.4 L47.1 159.6 L51.0 159.7 L54.4 160.5 L58.0 160.5 L61.4 161.4 L64.9 161.6 L68.3 162.3 L71.8 163.3 L75.3 164.1 L78.7 165.2 L82.2 165.9 L85.7 166.7 L90.3 167.2 L94.9 168.1 L99.5 168.4 L102.0 171.5 L104.7 174.5 L107.1 177.3 L109.4 180.2 L112.1 182.7 L114.6 185.4 L116.9 188.3 L119.7 190.6 L122.4 193.2 L125.0 195.8 L127.9 198.1 L130.7 200.5 L134.0 203.3 L136.6 206.8 L139.8 209.6 L142.9 212.6 L145.8 215.2 L149.1 217.4 L152.1 220.0 L155.5 222.2 L158.5 224.7 L161.9 226.0 L165.4 227.3 L168.8 228.7 L172.3 229.9 L176.7 229.7 L181.0 229.6 L185.3 229.1 L189.7 229.1 L193.2 227.7 L196.5 225.7 L200.2 224.8 L203.5 223.0 L206.9 220.2 L210.4 217.7 L213.9 215.2 L217.5 214.6 L220.9 213.5 L224.3 212.6" stroke-width="1.25"/><path d="M200.9 129.4 L199.1 133.5 L197.1 137.6 L194.9 141.5 L193.3 145.6 L191.4 149.6 L189.7 153.7 L189.1 158.3 L188.6 162.9 L187.9 167.5 L186.6 171.0 L185.2 174.5 L184.0 178.0 L182.4 181.4 L181.0 184.9 L179.9 188.4 L178.4 191.9 L176.8 195.2 L175.6 198.8 L174.1 202.2 L174.9 206.1 L175.3 210.0 L176.4 213.8 L176.7 217.8 L175.7 221.3 L174.8 224.8 L173.7 228.3 L172.3 231.7 L171.4 235.4 L171.0 239.3 L170.4 243.1 L169.8 247.0 L168.9 250.7 L168.4 254.4 L168.2 258.0 L168.1 261.7 L167.7 265.3 L167.1 268.9 L165.6 272.1 L164.2 275.4 L163.4 278.9 L161.5 281.9 L160.6 285.4 L159.1 288.6 L161.2 292.0 L163.5 295.2 L165.5 298.7 L167.3 302.2 L169.3 305.6 L171.9 308.2 L174.2 311.0 L177.1 313.2 L179.4 316.0 L182.2 318.3 L184.7 320.9 L187.5 323.3 L189.8 326.1 L192.7 328.5 L195.6 331.0 L198.6 333.3 L201.3 336.0 L204.4 338.2 L207.2 340.8 L210.2 343.1 L213.3 344.9 L216.2 346.8 L219.1 348.7 L221.8 351.0 L225.0 352.6 L227.6 355.0 L230.7 356.7 L234.7 357.1 L238.6 358.2 L242.6 358.3 L246.6 359.0 L250.6 359.6 L254.5 360.1 L258.4 360.9 L262.3 361.1 L266.2 361.7 L270.1 362.2 L274.0 362.8 L277.9 363.3 L281.8 363.5" stroke-width="1.25"/><path d="M460.6 338.0 L457.0 339.4 L453.2 340.1 L449.5 341.3 L445.7 342.4 L441.9 343.1 L438.5 344.0 L435.2 345.4 L431.8 346.5 L428.3 347.4 L424.9 348.5 L421.4 348.9 L418.1 350.3 L414.7 351.4 L411.3 352.6 L407.8 353.3 L403.5 353.9 L399.4 355.2 L395.1 356.0 L390.8 356.7 L389.1 359.8 L387.6 363.0 L386.0 366.1 L384.0 369.0" stroke-width="1.25"/><path d="M837.2 39.9 L834.1 41.6 L831.4 43.8 L828.2 45.5 L825.3 47.4 L822.7 49.8 L819.5 51.3 L816.7 53.5 L815.0 56.6 L813.0 59.6 L811.0 62.6 L809.1 65.6 L807.5 68.8 L805.7 71.9 L803.4 74.6 L801.8 77.9 L799.7 80.8 L796.7 82.9 L793.7 85.0 L790.8 87.3 L787.7 89.2 L784.8 91.4 L781.7 93.4 L778.8 95.6 L775.9 97.8 L772.8 99.9 L770.1 102.2 L767.2 104.5 L764.3 106.6 L761.8 109.4 L758.8 111.4 L757.2 114.8 L755.9 118.3 L754.7 121.8 L752.8 125.0 L751.8 128.6 L749.9 131.8 L748.6 135.3 L747.2 138.8 L745.2 142.1 L743.2 145.4 L741.8 148.9 L740.0 152.3 L738.4 155.8 L736.6 159.1 L735.0 162.5 L732.9 165.5 L731.0 168.5 L729.5 171.8 L727.3 174.6 L725.4 177.6 L723.6 180.7 L721.9 183.8 L720.0 186.9 L717.9 189.8 L715.3 192.6 L712.9 195.6 L710.2 198.2 L707.7 201.1 L705.2 204.1 L702.6 206.8 L699.3 208.3 L696.1 210.0 L692.9 211.7 L689.7 213.4 L686.6 215.3 L683.4 217.0 L680.2 218.7 L677.0 220.5 L673.8 222.4 L670.3 224.0 L666.7 225.4 L663.4 227.3 L660.1 229.2 L656.6 230.6 L653.3 232.5 L649.8 234.1 L646.5 235.8 L643.0 237.1 L639.5 238.5 L636.0 239.8 L632.7 241.6 L629.4 243.2 L626.1 245.0 L622.4 245.9 L619.1 247.7 L615.6 249.6 L612.2 251.6 L608.8 253.7 L605.4 255.7 L602.1 257.9" stroke-width="1.25"/><path d="M702.6 206.8 L706.4 208.4 L710.0 210.2 L713.6 212.1 L717.4 213.6 L721.1 215.3 L724.7 217.0 L728.1 218.4 L731.5 219.4 L735.1 220.0 L738.4 221.4 L741.8 222.4 L745.1 223.7 L748.6 224.6 L752.0 225.6 L755.6 224.8 L759.3 224.2 L763.1 223.9 L766.7 222.8 L770.4 222.6 L774.0 221.4 L777.7 221.0 L781.4 220.4 L785.0 219.4 L788.7 218.9 L792.4 218.6 L796.1 217.9 L799.7 217.0" stroke-width="1.25"/><path d="M590.2 285.2 L586.5 286.1 L582.7 286.1 L579.1 286.6 L575.4 287.3 L571.7 287.7 L568.0 288.6 L564.1 288.0 L560.1 287.9 L556.1 287.8 L552.1 287.5 L548.2 286.8 L544.2 286.9 L540.2 287.3 L536.2 287.2 L532.3 287.9 L528.3 288.2 L524.3 288.2 L520.3 288.6 L517.7 291.1 L514.7 293.2 L511.6 295.2 L508.9 297.5 L506.2 300.0 L503.3 302.2 L500.8 305.1 L497.8 307.4 L495.3 310.1 L492.6 312.7 L490.1 315.5 L487.2 317.9 L484.8 320.8 L481.9 323.2 L479.4 326.1 L476.5 328.0 L473.6 329.9 L470.5 331.7 L467.9 334.0 L464.8 335.7 L461.8 337.6 L459.0 339.7 L454.8 342.3 L450.5 344.8" stroke-width="1.25"/><path d="M978.4 -1.0 L978.4 2.5 L978.1 6.2 L977.4 10.0 L977.3 13.8 L976.9 17.5 L976.5 21.3 L975.8 25.0 L974.3 28.5 L972.5 31.8 L971.5 35.5 L969.7 38.9 L969.5 43.2 L968.9 47.5 L968.5 51.9 L968.0 56.2 L967.4 60.1 L966.0 63.8 L965.7 67.7 L964.8 71.5 L963.7 75.3 L962.3 78.7 L961.5 82.2 L960.5 85.7 L959.3 89.1 L958.7 93.7 L958.7 98.4 L958.5 103.0" stroke-width="1.25"/><path d="M1031.2 101.2 L1034.3 99.3 L1037.6 97.7 L1040.6 95.7 L1043.8 93.9 L1046.9 92.0 L1050.1 90.2 L1053.1 88.2 L1056.4 86.5 L1059.5 84.6 L1062.7 83.0 L1065.8 81.0 L1069.1 79.5 L1072.1 77.4 L1075.6 76.1 L1078.9 74.5 L1082.4 73.3 L1085.7 71.5 L1089.2 70.4 L1092.6 69.1 L1096.0 67.6 L1099.2 65.7 L1102.8 64.8 L1106.0 62.9 L1109.4 61.4 L1113.0 60.3 L1116.4 61.2 L1119.9 61.7 L1123.1 63.1 L1126.6 63.8 L1129.9 64.9 L1133.4 65.4 L1136.8 66.3 L1140.2 67.1 L1143.6 68.2 L1147.1 68.6 L1150.5 69.5 L1153.9 70.4 L1157.2 71.7 L1160.7 72.2 L1164.1 72.9 L1167.5 73.7 L1170.8 75.0 L1174.3 75.7 L1177.7 76.7 L1181.1 77.4 L1184.6 76.8 L1187.9 75.7 L1191.3 74.6 L1194.8 74.0 L1198.2 73.4 L1201.6 72.4 L1205.0 71.7 L1208.3 70.2 L1211.8 69.9 L1215.1 68.6 L1218.6 67.8 L1222.0 67.2 L1225.5 66.5 L1228.8 65.3 L1232.2 64.3 L1235.6 63.7 L1239.1 62.9 L1242.4 61.8 L1245.8 60.9 L1249.3 60.3 L1252.6 59.3 L1256.1 58.9 L1259.6 58.1 L1262.9 56.9 L1266.3 56.2 L1269.6 55.0 L1273.1 54.5 L1276.5 53.3 L1279.9 52.4 L1283.3 51.8 L1286.4 49.3 L1289.2 46.4 L1292.3 44.0 L1295.1 41.2 L1298.1 38.6 L1300.8 35.7 L1303.8 33.1" stroke-width="1.25"/><path d="M1099.3 -1.0 L1100.3 3.0 L1101.0 7.1 L1101.7 11.2 L1101.8 15.4 L1102.8 19.4 L1101.4 22.8 L1100.3 26.2 L1099.4 29.7 L1098.4 33.1 L1097.2 36.5 L1096.0 39.9 L1094.6 43.2 L1093.9 46.8 L1092.5 50.1 L1095.1 53.9 L1097.3 58.0 L1099.3 62.0 L1103.9 61.3 L1108.5 61.1 L1113.0 60.3" stroke-width="1.25"/><path d="M1283.3 51.8 L1284.4 55.6 L1285.4 59.4 L1285.9 63.3 L1286.7 67.1 L1285.6 70.6 L1284.2 73.9 L1283.2 77.3 L1282.5 80.9 L1280.9 84.1 L1280.0 87.6 L1279.0 91.1 L1277.9 94.5 L1276.5 97.8 L1276.0 101.7 L1274.5 105.4 L1274.1 109.3 L1273.4 113.2 L1272.2 117.0 L1271.1 120.7 L1270.6 124.6 L1269.7 128.5 L1267.5 131.2 L1265.9 134.4 L1263.7 137.2 L1261.8 140.1 L1259.7 142.9 L1258.3 146.2 L1256.1 148.9 L1253.9 151.9 L1252.2 155.2 L1250.0 158.1 L1247.7 161.0 L1245.8 164.2 L1243.7 167.2 L1241.5 170.2 L1240.0 173.6 L1237.6 176.5 L1235.6 179.6 L1233.6 182.7 L1231.4 185.6 L1229.2 188.6 L1227.3 191.7 L1225.5 195.0 L1223.4 198.0 L1221.6 201.2 L1219.5 204.2 L1217.2 207.1 L1215.2 210.2 L1213.3 213.4 L1211.0 216.3 L1208.9 219.2 L1206.8 222.3 L1204.6 225.2 L1202.3 228.0 L1200.6 231.3 L1198.2 234.1 L1195.8 236.9 L1193.1 239.2 L1190.3 241.6 L1187.9 244.3" stroke-width="1.25"/><path d="M1031.2 191.5 L1035.0 191.5 L1038.8 191.5 L1042.6 191.2 L1046.4 191.2 L1050.1 191.5 L1053.9 191.2 L1057.7 191.7 L1061.5 191.4 L1065.3 191.5 L1068.6 192.9 L1072.1 194.0 L1075.5 195.3 L1079.0 196.1 L1082.3 197.5 L1085.6 199.1 L1089.1 200.0 L1092.4 201.4 L1095.9 202.4 L1099.4 203.3 L1102.8 204.4 L1106.1 205.8 L1109.6 206.8 L1112.9 208.1 L1116.3 209.4 L1119.8 210.2 L1123.3 210.8 L1126.5 212.3 L1130.0 212.8 L1133.5 213.3 L1136.9 214.4 L1140.2 215.5 L1143.6 216.2 L1147.0 217.0 L1150.6 218.3 L1153.7 220.2 L1157.3 221.3 L1160.6 223.1 L1164.0 224.5 L1167.6 225.5 L1170.9 227.3 L1174.1 229.6 L1177.8 231.2 L1181.2 233.3 L1184.7 235.2 L1187.9 237.5" stroke-width="1.25"/><path d="M1198.2 234.1 L1199.1 237.5 L1199.9 241.0 L1201.3 244.2 L1202.3 247.6 L1202.8 251.2 L1203.7 254.6 L1205.0 257.9 L1205.0 261.9 L1204.9 265.9 L1204.9 269.9 L1204.8 273.8 L1205.0 277.8 L1205.0 281.8 L1204.2 285.7 L1203.6 289.7 L1202.9 293.7 L1202.5 297.7 L1202.3 301.7 L1201.6 305.6 L1204.0 309.2 L1206.5 312.6 L1209.0 316.0 L1211.8 319.3 L1213.7 322.2 L1215.6 325.2 L1217.9 327.8 L1219.6 330.9 L1221.8 333.7 L1223.5 336.7 L1225.4 339.7 L1227.5 342.9 L1229.0 346.3 L1231.1 349.5 L1232.9 352.8 L1234.9 356.0 L1236.5 359.4 L1238.6 362.5 L1240.7 365.6 L1242.4 369.0" stroke-width="1.25"/><path d="M1205.0 257.9 L1208.8 257.8 L1212.6 257.0 L1216.5 256.8 L1220.3 256.2 L1224.2 256.1 L1228.0 255.6 L1231.8 254.7 L1235.6 254.5 L1239.5 255.0 L1243.2 255.8 L1247.0 256.8 L1250.7 257.8 L1254.6 258.2 L1258.3 259.1 L1262.1 260.2 L1266.0 260.3 L1269.7 261.3 L1273.0 262.9 L1276.6 263.8 L1279.9 265.4 L1283.4 266.6 L1286.7 268.3 L1290.0 269.8 L1293.4 271.2 L1297.0 272.0 L1300.3 273.8 L1303.8 275.0 L1306.9 277.1 L1309.8 279.5 L1313.2 281.3 L1316.1 283.8 L1319.4 285.6 L1322.5 287.7 L1325.4 290.2 L1328.5 292.4 L1331.7 294.3 L1334.9 296.4 L1337.8 298.8 L1340.7 300.9 L1343.6 302.9 L1346.7 304.5 L1349.7 306.4 L1352.3 308.8 L1355.5 310.3 L1358.1 312.7 L1361.2 314.4 L1364.0 316.5 L1367.2 318.1 L1370.1 320.1 L1372.8 322.3 L1375.6 324.4 L1378.7 326.1 L1382.2 326.9 L1385.4 328.7 L1388.9 329.5 L1392.3 330.8 L1395.8 331.6 L1399.1 333.0 L1402.5 334.3 L1405.9 335.4 L1409.5 336.1 L1412.7 337.6 L1416.2 338.6 L1419.6 339.7" stroke-width="1.25"/><path d="M1211.8 319.3 L1209.0 322.0 L1205.7 324.2 L1203.0 327.1 L1200.0 329.6 L1197.1 332.3 L1194.1 334.8 L1191.1 337.3 L1187.9 339.7 L1185.1 342.3 L1182.3 344.8 L1179.4 347.3 L1176.3 349.5 L1173.4 351.9 L1170.3 354.2 L1167.5 356.7 L1164.7 359.1 L1162.1 361.7 L1159.5 364.3 L1156.8 366.8 L1153.9 369.0" stroke-width="1.25"/><path d="M1235.6 -1.0 L1236.5 2.4 L1237.6 5.7 L1238.5 9.2 L1239.0 12.6 L1242.5 14.7 L1245.9 16.7 L1249.4 18.5 L1252.8 20.6 L1256.1 22.8 L1259.5 21.9 L1262.8 20.9 L1266.4 20.6 L1269.7 19.4 L1272.9 22.2 L1276.4 24.7 L1280.0 27.0 L1283.3 29.7 L1287.5 30.7 L1291.8 31.4 L1296.1 32.5 L1300.4 33.1" stroke-width="1.25"/><path d="M799.0 216.3 L803.7 215.9 L808.2 214.9 L812.9 214.5 L817.0 214.6 L821.2 214.5 L825.3 214.2 L829.5 214.3 L833.7 214.5 L837.6 214.6 L841.5 215.1 L845.4 215.1 L849.3 215.4 L852.6 211.8 L856.2 208.5 L858.6 205.7 L861.5 203.4 L863.8 200.5 L866.6 198.1 L871.8 196.3" stroke-width="1.25"/></g>
<g fill="none" stroke="#a9a6a6" stroke-linejoin="round" stroke-linecap="round" ><path d="M608.9 -1.0 L618.5 11.8 L627.0 31.0 L633.4 48.1 L629.1 69.4 L628.1 92.9 L629.1 105.7 L624.9 122.7 L624.9 135.5 L628.1 152.6 L624.9 165.4 L617.4 179.1 L613.5 205.2 L608.2 222.7 L603.8 236.7 L603.0 249.0 L597.7 256.0 L590.7 257.7 L587.2 266.5 L589.0 277.0 L592.5 287.5" stroke-width="1.1"/></g>
<g fill="none" stroke="#8c9cc4" stroke-linejoin="round" stroke-linecap="round" opacity=".85"><path d="M-1.0 45.8 L4.2 42.3 L6.1 38.3 L7.5 34.2 L9.4 30.2 L13.3 30.3 L17.2 30.4 L21.1 29.6 L25.0 29.8 L28.9 29.3 L32.8 29.9 L36.7 29.0 L40.6 29.3 L44.4 31.0 L48.4 31.9 L52.3 33.1 L56.2 34.5 L59.6 36.9 L63.3 38.8 L66.6 41.4 L70.3 43.2 L73.5 45.8 L76.4 48.5 L78.8 51.5 L81.2 54.6 L84.2 57.1 L86.7 60.1 L89.1 63.1 L90.8 66.6 L93.0 69.9 L94.1 73.7 L96.1 77.0 L99.5 75.2 L102.8 73.2 L106.5 71.8 L110.0 71.0 L113.2 69.0 L116.9 68.3 L119.0 71.3 L121.8 73.9 L123.8 77.0 L127.4 80.3 L130.7 83.9 L134.7 82.5 L138.8 81.7 L142.9 80.5 L146.8 78.0 L150.9 75.8 L155.0 73.5 L157.9 70.6 L160.7 67.6 L163.7 64.9 L168.0 64.4 L172.3 64.0 L175.7 65.1 L179.3 65.5 L182.6 67.0 L186.2 67.5 L190.5 67.4 L194.9 67.5 L199.2 68.2 L203.5 68.3 L205.9 72.8 L208.7 77.0 L210.2 81.0 L211.3 85.0 L212.2 89.1 L214.7 91.9 L216.8 95.0 L218.6 98.3 L220.9 101.3 L223.8 103.5 L226.4 106.2 L229.5 108.2 L233.5 109.1 L237.6 109.2 L241.7 109.9 L245.1 111.2 L248.7 111.8 L252.2 112.9 L255.5 114.3 L259.0 115.1" stroke-width="1.3"/><path d="M186.2 67.5 L189.7 66.6 L193.2 65.8 L196.6 64.9 L195.6 60.3 L195.3 55.6 L194.9 51.0 L193.5 47.5 L192.5 44.0 L191.0 40.6 L189.7 37.1 L186.2 35.5 L182.7 33.7 L179.3 32.6 L175.7 32.0 L172.5 30.3 L168.8 30.1 L165.4 28.9 L162.0 27.8 L158.3 27.4 L155.0 25.9 L151.5 25.0 L149.6 20.7 L146.6 17.1 L144.6 12.9 L148.1 10.6 L151.3 7.9 L155.0 5.9 L158.5 5.1 L161.8 3.8 L165.5 3.8 L168.9 2.4 L172.4 2.1 L175.8 0.7 L179.3 0.1 L182.7 -1.0" stroke-width="1.3"/><path d="M172.3 68.3 L170.6 72.4 L168.5 76.3 L167.1 80.5 L166.8 84.6 L166.1 88.6 L165.4 92.6 L162.9 96.0 L160.6 99.4 L158.5 103.0 L159.0 106.5 L159.2 110.0 L160.2 113.4 L160.5 118.6" stroke-width="1.3"/></g>
<g fill="none" stroke="#bfb4d0" stroke-linejoin="round" stroke-linecap="round" opacity=".2"><path d="M259.0 115.1 L263.9 116.4 L269.0 116.5 L272.9 116.6 L276.8 116.3 L280.7 117.2 L285.4 116.4 L290.2 116.3 L294.6 116.0 L298.9 114.6 L302.9 115.2 L307.0 115.3 L311.0 114.6 L315.4 114.5 L319.7 115.5 L322.8 118.1 L326.6 119.8 L331.8 115.5 L335.3 116.3 L335.5 121.5 L335.3 126.7 L337.0 130.2 L341.3 129.8 L345.7 129.3 L348.9 127.2 L352.6 125.9 L357.8 125.9 L361.3 130.2 L361.7 134.6 L363.0 138.9 L363.1 143.3 L364.7 147.5 L367.0 150.7 L368.2 154.5 L371.4 156.7 L375.1 157.9 L376.1 161.5 L377.7 164.9 L373.4 170.1 L371.5 173.7 L369.1 177.0 L371.7 182.2 L375.9 183.6 L380.3 183.9 L383.8 184.7 L387.4 185.1 L390.7 186.5 L394.4 186.1 L397.7 184.2 L401.1 183.1 L406.3 187.4 L408.2 190.6 L408.9 194.3 L412.4 195.2 L412.7 191.2 L414.1 187.4 L418.5 183.9 L425.4 183.9 L428.7 186.0 L432.3 187.4 L434.8 191.0 L437.5 194.3 L439.9 197.2 L442.7 199.5 L445.3 201.3 L447.1 198.7 L447.7 193.9 L448.8 189.1 L454.9 187.4 L456.0 187.7 L459.5 190.4 L463.0 193.0 L466.9 195.1 L470.0 198.2 L473.5 199.5 L477.2 199.9 L480.5 201.7 L484.7 203.9 L489.2 205.2 L492.7 210.5 L491.0 213.8 L490.1 217.5 L492.7 222.7 L496.0 224.6 L499.7 225.4 L505.0 229.7 L506.2 233.1 L505.9 236.8 L506.7 240.2 L509.1 244.8 L512.0 249.0 L515.7 251.3 L519.0 254.2 L522.5 256.0 L522.1 260.5 L520.7 264.7 L521.5 269.1 L522.5 273.5 L524.6 277.7 L526.0 282.2 L529.3 285.1 L533.0 287.5 L536.6 287.4 L539.9 289.1 L543.5 289.2 L547.7 291.4 L552.2 292.7 L553.3 297.4 L555.7 301.5 L557.4 304.8 L557.3 308.7 L559.2 312.0 L557.1 316.1 L556.6 320.7 L557.8 324.1 L558.1 327.8 L559.2 331.2 L560.3 335.1 L562.7 338.2 L563.2 342.5 L565.0 346.4 L566.2 350.5 L568.6 355.0 L571.5 359.2 L574.8 361.7 L578.5 363.6 L583.7 367.1" stroke-width="3.2"/><path d="M583.7 367.1 L586.9 364.0 L589.0 360.1 L593.2 358.5 L597.7 357.5 L601.3 359.0 L604.7 361.0 L607.3 367.1" stroke-width="3.2"/><path d="M160.2 119.0 L155.0 122.5 L150.7 124.3 L146.3 125.9 L143.0 127.9 L139.4 129.4 L137.0 132.5 L135.9 136.3 L133.8 140.1 L130.7 143.3 L131.0 146.9 L132.5 150.2 L135.9 151.1 L134.2 146.7 L127.3 145.9 L123.5 146.4 L120.3 148.5 L118.1 151.7 L116.9 155.4 L118.6 160.6 L114.8 162.8 L111.7 165.8 L106.5 170.1 L99.5 171.0 L96.5 174.5 L93.5 177.9 L92.1 181.4 L90.9 184.9 L88.1 187.3 L85.7 190.1 L83.6 193.1 L81.4 196.1 L78.7 198.7 L76.6 203.3 L73.5 207.4 L74.4 214.3 L74.6 218.0 L76.1 221.3 L74.8 225.4 L73.9 229.6 L71.8 233.4 L67.5 235.1 L63.1 236.9 L58.7 237.1 L54.5 238.6 L50.1 243.8 L50.5 248.2 L51.9 252.5 L50.4 255.8 L48.3 258.6 L45.8 261.1 L42.4 265.1 L38.9 268.9 L36.5 271.6 L39.0 274.2 L40.4 277.7 L43.1 280.2 L45.7 282.8 L48.0 285.6 L50.1 288.6 L53.0 290.7 L56.1 292.8 L59.1 294.8 L61.2 298.0 L64.0 300.4 L67.1 302.2 L70.1 304.7 L72.5 307.7 L75.6 310.2 L78.4 312.8 L80.8 315.9 L81.7 319.3 L83.0 322.7 L84.2 326.1 L87.5 329.6 L91.0 332.9 L90.3 336.3 L89.0 339.6 L88.6 343.2 L87.6 346.5 L91.2 348.9 L94.0 352.2 L97.7 354.3 L101.2 356.7 L104.6 358.5 L108.0 360.1 L105.9 364.4 L104.6 369.0" stroke-width="3.2"/><path d="M655.4 367.1 L656.3 363.6 L657.6 360.3 L659.9 357.4 L660.7 354.0 L661.0 349.6 L660.5 345.2 L661.0 340.8 L660.7 336.5 L659.3 333.1 L659.0 329.5 L658.1 326.1 L658.6 322.3 L657.2 319.0 L656.0 315.6 L654.8 312.1 L654.3 308.5 L653.7 305.0 L651.9 301.7 L650.9 298.1 L650.2 294.5 L650.8 290.0 L651.9 285.7 L655.5 283.2 L658.9 280.5 L663.3 278.3 L667.7 276.1 L670.3 277.0 L669.5 280.4 L669.4 284.0 L671.9 288.4 L674.7 292.7 L675.5 296.2 L675.9 299.7 L676.4 303.2 L680.1 306.5 L683.4 310.2 L686.6 313.3 L690.4 315.5 L693.9 317.4 L697.4 319.0 L701.8 319.9 L706.2 320.7 L711.1 319.3 L715.3 319.2 L719.3 318.1 L723.3 316.7 L727.6 317.2 L731.6 315.9 L735.9 316.1 L740.0 318.0 L744.4 318.1 L748.6 319.3 L751.9 320.9 L755.6 321.5 L759.0 322.9 L762.2 324.9 L765.6 326.1 L767.8 329.2 L769.4 332.7 L771.4 336.0 L772.4 339.7 L771.1 343.0 L771.0 346.6 L770.6 350.1 L769.0 353.3 L772.6 355.3 L776.1 357.6 L779.3 360.1 L782.6 358.9 L785.9 357.6 L789.4 356.8 L792.4 354.8 L795.6 353.4 L799.0 352.2 L802.0 350.0 L804.2 347.0 L805.9 343.1 L807.7 339.2 L814.6 338.3 L817.6 340.5 L819.8 343.5 L822.7 345.8 L825.0 348.7 L828.7 349.9 L831.6 352.9 L835.4 353.9 L839.8 354.3 L844.1 355.7 L849.3 359.1 L853.7 358.9 L857.9 360.0 L863.1 359.3 L868.3 360.0 L871.4 362.6 L875.3 364.0 L877.9 361.6 L880.5 359.1 L883.8 357.1 L887.4 355.7 L891.6 354.3 L896.1 353.9 L899.3 351.8 L903.0 350.5 L905.5 347.4 L908.2 344.4 L907.6 339.4 L905.6 334.9 L905.8 329.6 L905.1 324.5 L907.5 321.9 L909.9 319.3 L913.4 318.9 L916.8 317.6 L920.3 317.5 L923.9 316.3 L927.2 314.5 L930.7 313.2 L933.9 310.9 L937.7 309.7 L940.5 306.9 L942.9 303.7 L947.1 304.8 L951.5 305.4 L958.5 304.5 L962.4 306.5 L965.4 309.7 L969.2 308.7 L972.3 306.3 L973.9 303.0 L976.4 300.5 L979.0 297.9 L981.0 295.0 L984.7 295.1 L987.9 296.7 L991.2 299.6 L994.9 301.9 L998.8 305.1 L1003.5 307.1 L1006.1 310.7 L1008.7 314.1 L1012.3 314.5 L1015.7 315.8 L1022.6 314.9 L1026.7 312.3 L1031.3 310.6 L1034.5 307.7 L1038.2 305.3 L1041.7 302.8 L1045.3 302.1 L1048.6 300.2 L1052.0 299.3 L1055.6 299.3 L1059.0 298.5 L1059.1 300.1 L1064.2 299.5 L1069.3 298.9 L1073.3 296.6 L1076.9 293.8 L1081.8 291.8 L1087.0 291.3 L1090.7 287.9 L1093.3 283.7 L1095.1 278.7 L1095.9 273.5 L1098.8 270.7 L1102.2 268.5 L1106.0 269.1 L1109.8 268.5 L1110.0 264.1 L1111.9 260.1 L1112.3 255.8 L1116.3 253.5 L1119.9 250.7 L1123.7 249.2 L1127.5 248.2 L1129.3 252.0 L1131.3 255.8 L1134.7 259.4 L1137.7 263.4 L1141.8 264.5 L1146.2 263.8 L1150.3 264.7 L1154.6 264.3 L1158.8 264.1 L1163.0 264.7 L1167.2 264.4 L1171.5 264.5 L1175.7 263.4 L1178.7 260.6 L1180.7 257.1 L1184.1 255.6 L1186.2 252.2 L1189.6 250.7 L1192.2 247.0 L1194.7 243.1 L1198.2 240.5 L1202.6 239.5 L1206.1 236.8 L1209.4 234.7 L1213.0 232.9 L1216.2 230.5 L1219.8 228.2 L1223.3 225.9 L1226.3 222.9 L1231.4 221.6 L1235.4 218.7 L1239.0 215.3 L1241.9 212.9 L1245.3 211.5 L1244.8 207.7 L1245.3 203.9 L1248.2 201.5 L1251.7 200.1 L1255.9 200.1 L1260.1 200.8 L1264.3 200.1 L1267.9 198.1 L1271.9 197.5 L1277.0 200.1 L1280.8 197.5 L1284.6 195.0 L1288.7 197.2 L1292.2 200.1 L1296.1 197.0 L1299.8 193.7 L1304.2 192.3 L1308.7 191.2 L1308.8 187.2 L1310.9 183.7 L1311.2 179.8 L1314.9 177.1 L1317.5 173.5 L1320.7 171.0 L1324.3 169.2 L1327.7 167.1 L1331.5 163.3 L1337.8 165.9 L1341.7 162.8 L1345.4 159.5 L1349.3 156.4 L1353.0 153.2 L1358.1 153.0 L1363.1 153.2 L1366.3 151.3 L1369.9 150.7 L1373.3 149.4 L1376.1 147.2 L1377.8 143.8 L1380.9 141.8 L1382.9 137.4 L1384.7 132.9 L1387.3 129.8 L1389.7 126.6 L1394.3 127.3 L1398.6 129.1 L1403.7 129.0 L1408.7 127.9 L1413.9 127.7 L1418.9 129.1" stroke-width="3.2"/></g>
<g fill="none" stroke="#9c96ab" stroke-linejoin="round" stroke-linecap="round" opacity=".97"><path d="M259.0 115.1 L263.9 116.4 L269.0 116.5 L272.9 116.6 L276.8 116.3 L280.7 117.2 L285.4 116.4 L290.2 116.3 L294.6 116.0 L298.9 114.6 L302.9 115.2 L307.0 115.3 L311.0 114.6 L315.4 114.5 L319.7 115.5 L322.8 118.1 L326.6 119.8 L331.8 115.5 L335.3 116.3 L335.5 121.5 L335.3 126.7 L337.0 130.2 L341.3 129.8 L345.7 129.3 L348.9 127.2 L352.6 125.9 L357.8 125.9 L361.3 130.2 L361.7 134.6 L363.0 138.9 L363.1 143.3 L364.7 147.5 L367.0 150.7 L368.2 154.5 L371.4 156.7 L375.1 157.9 L376.1 161.5 L377.7 164.9 L373.4 170.1 L371.5 173.7 L369.1 177.0 L371.7 182.2 L375.9 183.6 L380.3 183.9 L383.8 184.7 L387.4 185.1 L390.7 186.5 L394.4 186.1 L397.7 184.2 L401.1 183.1 L406.3 187.4 L408.2 190.6 L408.9 194.3 L412.4 195.2 L412.7 191.2 L414.1 187.4 L418.5 183.9 L425.4 183.9 L428.7 186.0 L432.3 187.4 L434.8 191.0 L437.5 194.3 L439.9 197.2 L442.7 199.5 L445.3 201.3 L447.1 198.7 L447.7 193.9 L448.8 189.1 L454.9 187.4 L456.0 187.7 L459.5 190.4 L463.0 193.0 L466.9 195.1 L470.0 198.2 L473.5 199.5 L477.2 199.9 L480.5 201.7 L484.7 203.9 L489.2 205.2 L492.7 210.5 L491.0 213.8 L490.1 217.5 L492.7 222.7 L496.0 224.6 L499.7 225.4 L505.0 229.7 L506.2 233.1 L505.9 236.8 L506.7 240.2 L509.1 244.8 L512.0 249.0 L515.7 251.3 L519.0 254.2 L522.5 256.0 L522.1 260.5 L520.7 264.7 L521.5 269.1 L522.5 273.5 L524.6 277.7 L526.0 282.2 L529.3 285.1 L533.0 287.5 L536.6 287.4 L539.9 289.1 L543.5 289.2 L547.7 291.4 L552.2 292.7 L553.3 297.4 L555.7 301.5 L557.4 304.8 L557.3 308.7 L559.2 312.0 L557.1 316.1 L556.6 320.7 L557.8 324.1 L558.1 327.8 L559.2 331.2 L560.3 335.1 L562.7 338.2 L563.2 342.5 L565.0 346.4 L566.2 350.5 L568.6 355.0 L571.5 359.2 L574.8 361.7 L578.5 363.6 L583.7 367.1" stroke-width="1.3"/><path d="M583.7 367.1 L586.9 364.0 L589.0 360.1 L593.2 358.5 L597.7 357.5 L601.3 359.0 L604.7 361.0 L607.3 367.1" stroke-width="1.3"/><path d="M160.2 119.0 L155.0 122.5 L150.7 124.3 L146.3 125.9 L143.0 127.9 L139.4 129.4 L137.0 132.5 L135.9 136.3 L133.8 140.1 L130.7 143.3 L131.0 146.9 L132.5 150.2 L135.9 151.1 L134.2 146.7 L127.3 145.9 L123.5 146.4 L120.3 148.5 L118.1 151.7 L116.9 155.4 L118.6 160.6 L114.8 162.8 L111.7 165.8 L106.5 170.1 L99.5 171.0 L96.5 174.5 L93.5 177.9 L92.1 181.4 L90.9 184.9 L88.1 187.3 L85.7 190.1 L83.6 193.1 L81.4 196.1 L78.7 198.7 L76.6 203.3 L73.5 207.4 L74.4 214.3 L74.6 218.0 L76.1 221.3 L74.8 225.4 L73.9 229.6 L71.8 233.4 L67.5 235.1 L63.1 236.9 L58.7 237.1 L54.5 238.6 L50.1 243.8 L50.5 248.2 L51.9 252.5 L50.4 255.8 L48.3 258.6 L45.8 261.1 L42.4 265.1 L38.9 268.9 L36.5 271.6 L39.0 274.2 L40.4 277.7 L43.1 280.2 L45.7 282.8 L48.0 285.6 L50.1 288.6 L53.0 290.7 L56.1 292.8 L59.1 294.8 L61.2 298.0 L64.0 300.4 L67.1 302.2 L70.1 304.7 L72.5 307.7 L75.6 310.2 L78.4 312.8 L80.8 315.9 L81.7 319.3 L83.0 322.7 L84.2 326.1 L87.5 329.6 L91.0 332.9 L90.3 336.3 L89.0 339.6 L88.6 343.2 L87.6 346.5 L91.2 348.9 L94.0 352.2 L97.7 354.3 L101.2 356.7 L104.6 358.5 L108.0 360.1 L105.9 364.4 L104.6 369.0" stroke-width="1.3"/><path d="M655.4 367.1 L656.3 363.6 L657.6 360.3 L659.9 357.4 L660.7 354.0 L661.0 349.6 L660.5 345.2 L661.0 340.8 L660.7 336.5 L659.3 333.1 L659.0 329.5 L658.1 326.1 L658.6 322.3 L657.2 319.0 L656.0 315.6 L654.8 312.1 L654.3 308.5 L653.7 305.0 L651.9 301.7 L650.9 298.1 L650.2 294.5 L650.8 290.0 L651.9 285.7 L655.5 283.2 L658.9 280.5 L663.3 278.3 L667.7 276.1 L670.3 277.0 L669.5 280.4 L669.4 284.0 L671.9 288.4 L674.7 292.7 L675.5 296.2 L675.9 299.7 L676.4 303.2 L680.1 306.5 L683.4 310.2 L686.6 313.3 L690.4 315.5 L693.9 317.4 L697.4 319.0 L701.8 319.9 L706.2 320.7 L711.1 319.3 L715.3 319.2 L719.3 318.1 L723.3 316.7 L727.6 317.2 L731.6 315.9 L735.9 316.1 L740.0 318.0 L744.4 318.1 L748.6 319.3 L751.9 320.9 L755.6 321.5 L759.0 322.9 L762.2 324.9 L765.6 326.1 L767.8 329.2 L769.4 332.7 L771.4 336.0 L772.4 339.7 L771.1 343.0 L771.0 346.6 L770.6 350.1 L769.0 353.3 L772.6 355.3 L776.1 357.6 L779.3 360.1 L782.6 358.9 L785.9 357.6 L789.4 356.8 L792.4 354.8 L795.6 353.4 L799.0 352.2 L802.0 350.0 L804.2 347.0 L805.9 343.1 L807.7 339.2 L814.6 338.3 L817.6 340.5 L819.8 343.5 L822.7 345.8 L825.0 348.7 L828.7 349.9 L831.6 352.9 L835.4 353.9 L839.8 354.3 L844.1 355.7 L849.3 359.1 L853.7 358.9 L857.9 360.0 L863.1 359.3 L868.3 360.0 L871.4 362.6 L875.3 364.0 L877.9 361.6 L880.5 359.1 L883.8 357.1 L887.4 355.7 L891.6 354.3 L896.1 353.9 L899.3 351.8 L903.0 350.5 L905.5 347.4 L908.2 344.4 L907.6 339.4 L905.6 334.9 L905.8 329.6 L905.1 324.5 L907.5 321.9 L909.9 319.3 L913.4 318.9 L916.8 317.6 L920.3 317.5 L923.9 316.3 L927.2 314.5 L930.7 313.2 L933.9 310.9 L937.7 309.7 L940.5 306.9 L942.9 303.7 L947.1 304.8 L951.5 305.4 L958.5 304.5 L962.4 306.5 L965.4 309.7 L969.2 308.7 L972.3 306.3 L973.9 303.0 L976.4 300.5 L979.0 297.9 L981.0 295.0 L984.7 295.1 L987.9 296.7 L991.2 299.6 L994.9 301.9 L998.8 305.1 L1003.5 307.1 L1006.1 310.7 L1008.7 314.1 L1012.3 314.5 L1015.7 315.8 L1022.6 314.9 L1026.7 312.3 L1031.3 310.6 L1034.5 307.7 L1038.2 305.3 L1041.7 302.8 L1045.3 302.1 L1048.6 300.2 L1052.0 299.3 L1055.6 299.3 L1059.0 298.5 L1059.1 300.1 L1064.2 299.5 L1069.3 298.9 L1073.3 296.6 L1076.9 293.8 L1081.8 291.8 L1087.0 291.3 L1090.7 287.9 L1093.3 283.7 L1095.1 278.7 L1095.9 273.5 L1098.8 270.7 L1102.2 268.5 L1106.0 269.1 L1109.8 268.5 L1110.0 264.1 L1111.9 260.1 L1112.3 255.8 L1116.3 253.5 L1119.9 250.7 L1123.7 249.2 L1127.5 248.2 L1129.3 252.0 L1131.3 255.8 L1134.7 259.4 L1137.7 263.4 L1141.8 264.5 L1146.2 263.8 L1150.3 264.7 L1154.6 264.3 L1158.8 264.1 L1163.0 264.7 L1167.2 264.4 L1171.5 264.5 L1175.7 263.4 L1178.7 260.6 L1180.7 257.1 L1184.1 255.6 L1186.2 252.2 L1189.6 250.7 L1192.2 247.0 L1194.7 243.1 L1198.2 240.5 L1202.6 239.5 L1206.1 236.8 L1209.4 234.7 L1213.0 232.9 L1216.2 230.5 L1219.8 228.2 L1223.3 225.9 L1226.3 222.9 L1231.4 221.6 L1235.4 218.7 L1239.0 215.3 L1241.9 212.9 L1245.3 211.5 L1244.8 207.7 L1245.3 203.9 L1248.2 201.5 L1251.7 200.1 L1255.9 200.1 L1260.1 200.8 L1264.3 200.1 L1267.9 198.1 L1271.9 197.5 L1277.0 200.1 L1280.8 197.5 L1284.6 195.0 L1288.7 197.2 L1292.2 200.1 L1296.1 197.0 L1299.8 193.7 L1304.2 192.3 L1308.7 191.2 L1308.8 187.2 L1310.9 183.7 L1311.2 179.8 L1314.9 177.1 L1317.5 173.5 L1320.7 171.0 L1324.3 169.2 L1327.7 167.1 L1331.5 163.3 L1337.8 165.9 L1341.7 162.8 L1345.4 159.5 L1349.3 156.4 L1353.0 153.2 L1358.1 153.0 L1363.1 153.2 L1366.3 151.3 L1369.9 150.7 L1373.3 149.4 L1376.1 147.2 L1377.8 143.8 L1380.9 141.8 L1382.9 137.4 L1384.7 132.9 L1387.3 129.8 L1389.7 126.6 L1394.3 127.3 L1398.6 129.1 L1403.7 129.0 L1408.7 127.9 L1413.9 127.7 L1418.9 129.1" stroke-width="1.3"/></g>
<g fill="none" stroke="#f0a48c" stroke-linejoin="round" stroke-linecap="round" ><path d="M89.3 -1.0 L111.4 19.4 L135.3 43.3 L155.7 68.8 L172.8 80.8 L189.8 108.0 L197.5 119.0 L200.1 127.7 L208.7 136.3 L213.1 143.3 L213.1 153.7 L210.5 172.7 L215.7 188.3 L224.3 207.4 L233.0 223.0 L245.1 238.6 L248.6 252.5 L251.2 268.9 L252.8 275.0 L261.3 298.8 L266.4 319.3 L268.2 339.7 L275.0 356.7 L281.8 369.0" stroke-width="1.5"/><path d="M633.8 -1.0 L632.3 20.3 L634.5 50.2 L632.3 69.4 L633.4 90.7 L636.6 109.9 L634.5 127.0 L632.3 148.3 L627.0 163.3 L621.7 179.1 L617.0 196.5 L611.7 214.0 L606.5 231.5 L603.0 245.5 L599.5 256.0 L602.1 263.0 L597.7 270.0 L591.6 280.5 L594.2 291.0 L601.2 301.5 L610.0 313.7 L620.5 324.2 L631.0 338.2 L641.4 352.2 L651.9 367.1" stroke-width="1.5"/><path d="M602.1 263.0 L604.7 277.0 L611.7 301.5 L611.7 317.2 L624.0 333.0 L638.0 350.5 L650.2 367.1" stroke-width="0.9"/></g>
<g fill="#f8d6a4" stroke="#f0a640" stroke-width="1.1" stroke-linejoin="round"><path d="M266.5 103.0 L268.0 100.0 L272.0 99.5 L276.0 100.5 L278.0 104.0 L279.7 111.0 L281.0 117.0 L280.0 125.0 L276.0 131.0 L272.0 137.5 L270.3 144.0 L267.7 151.0 L265.0 151.7 L263.7 142.0 L264.3 135.0 L265.0 127.0 L264.5 117.0 L265.7 108.0Z"/><path d="M845.8 245.7 L853.6 246.9 L851.9 257.9 L845.5 261.9 L844.9 255.3Z"/><path d="M1122.5 133.6 L1129.3 134.9 L1128.3 139.4 L1121.5 138.0Z"/><path d="M1121.8 139.4 L1128.7 140.7 L1125.9 149.6 L1120.5 147.5Z"/><path d="M1117.1 155.4 L1124.9 157.4 L1123.9 161.2 L1116.0 159.1Z"/><path d="M1133.4 152.3 L1137.5 153.0 L1137.5 158.4 L1133.4 157.1Z"/></g>
<path d="M526.0 367.1 L526.3 357.1 L560.1 358.0 L558.9 367.1" fill="none" stroke="#a8d4a0" stroke-width="1.300" stroke-linejoin="round"/>
</svg><!--/MAPSVG--><!--OVERLAY-->
<svg width="1419" height="365" viewBox="0 0 1419 365" style="position:absolute;left:0;top:0;overflow:visible">
 <g font-family="'DejaVu Sans','Liberation Sans',sans-serif" text-anchor="middle" stroke-linejoin="round">
  <g font-style="italic" font-size="9.600" fill="#7f9fc6" opacity=".95">
   <text x="160" y="23.500" textLength="37.300" lengthAdjust="spacingAndGlyphs">Lago de</text><text x="160" y="36.500" textLength="59.800" lengthAdjust="spacingAndGlyphs">Paso Palmar</text>
  </g>
  <g font-size="8.800" fill="#5a5a5a" stroke="#fff" stroke-width="1.500" paint-order="stroke" stroke-opacity=".7">
   <text x="623" y="22.500" textLength="56" lengthAdjust="spacingAndGlyphs">Carlos Reyles</text>
   <text x="1182.500" y="244.300" textLength="47.600" lengthAdjust="spacingAndGlyphs">Sarandí del</text><text x="1182.500" y="254.600">Yi</text>
  </g>
  <text x="592.800" y="278.700" font-size="11.600" fill="#555" stroke="#fff" stroke-width="1.800" paint-order="stroke" stroke-opacity=".8" textLength="46.400" lengthAdjust="spacingAndGlyphs">Durazno</text>
 </g>
 <!-- airport -->
 <path transform="translate(609.5,260.5) scale(.52)" fill="#8461c4" d="M0-11c1.2 0 1.8 1.5 1.8 3.2V-3L11 3v2.4L1.8 2.6v5L4.6 9.8v1.7L0 10.3l-4.600 1.200V9.800L-1.800 7.600v-5L-11 5.400V3l9.200-6v-4.800C-1.800-9.500-1.200-11 0-11z"/>
 <!-- movement lines -->
 <g fill="none" stroke="#4886dc" stroke-opacity=".92" stroke-width="2.500" stroke-linecap="round" stroke-dasharray="4.200 9.300">
  <path d="M270 121.800L1146 161.400" stroke-dashoffset="1.700"/>
  <path d="M270 121.800L917 208.300" stroke-dasharray="4.200 9.400" stroke-dashoffset="-5.300"/>
 </g>
 <g fill="none" stroke="#3f7fd8" stroke-width="1" stroke-linecap="round" stroke-linejoin="round">
  <path d="M697.400 144.500h12.800m-3.600-2.800l3.600 2.800l-3.600 2.800"/>
  <path d="M599.300 163.900L585.400 165.400m3.800 2.400l-3.800-2.400l3.200-3.200"/>
 </g>
 <!-- markers -->
 <g font-family="'Liberation Sans',Arial,sans-serif" font-weight="700" font-size="11.600" text-anchor="middle" fill="#eafff0">
  <circle cx="270" cy="123.800" r="11.200" fill="#1aa1b6" stroke="#fff" stroke-opacity=".85" stroke-width="1.300" filter="url(#ms)"/>
  <text x="270" y="128">2</text>
  <circle cx="1146" cy="162.600" r="11.200" fill="#28a445" stroke="#fff" stroke-opacity=".85" stroke-width="1.300" filter="url(#ms)"/>
  <text x="1146" y="166.800">3</text>
  <circle cx="917.100" cy="211.600" r="11.200" fill="#28a445" stroke="#fff" stroke-opacity=".85" stroke-width="1.300" filter="url(#ms)"/>
  <text x="917.100" y="215.800">1</text>
 </g>
 <defs><filter id="ms" x="-50%" y="-50%" width="200%" height="200%"><feDropShadow dx="0" dy="1.500" stdDeviation="1.500" flood-color="#000" flood-opacity=".3"/></filter></defs>
</svg>
<div id="zc"><div class="zb" style="height:26.500px;border-bottom:1px solid #ccc"><i style="left:7.850px;top:15.050px;width:11.100px;height:2.300px"></i><i style="left:12.250px;top:10.650px;width:2.300px;height:11.100px"></i></div><div class="zb" style="height:26.900px"><i style="left:7.850px;top:14.800px;width:11.100px;height:2.400px"></i></div></div>
<div id="lc"><svg width="24" height="23" viewBox="0 0 24 23" style="position:absolute;left:1.300px;top:2.400px"><path d="M12 8.300L23.800 15.500L12 22.700L.200 15.500Z" fill="#a9a9a9"/><path d="M12 4.300L23.800 11.500L12 18.700L.200 11.500Z" fill="#c6c6c6" stroke="#f4f4f4" stroke-width=".5"/><path d="M12 .300L23.800 7.500L12 14.700L.200 7.500Z" fill="#e3e3e3" stroke="#f4f4f4" stroke-width=".5"/><path d="M12 .300L23.800 7.500L12 14.700L.200 7.500Z" fill="none" stroke="#c9c9c9" stroke-width=".4"/></svg></div>
<div id="pop">
 <div class="px">×</div>
 <div class="pt"><b>Potrero</b><br><b>Fecha:</b> 21/9/2025<br><b>Tipo:</b> internal<br><b>Notas:</b> Fueron Forestacion Los Montes<br><b>Estado:</b> Actual</div>
</div>
<div id="poptipc"><div id="poptip"></div></div>
<div id="attr"><span style="color:#0b78a9">Leaflet</span> | © <span style="color:#0b78a9">OpenStreetMap</span> contributors</div>
<!--/OVERLAY--></div>
</div>

<div id="hist" class="abs pp md">Historial de Movimientos</div>
<table>
 <colgroup><col style="width:130.500px"><col style="width:151.700px"><col style="width:401.800px"><col style="width:502px"><col style="width:98.300px"><col style="width:134px"></colgroup>
 <tr><th>Fecha</th><th>Tipo</th><th>Ubicación</th><th>Notas</th><th>Estado</th><th>Acciones</th></tr>
 <tr><td>22/09/2025</td><td><span class="badge g">Interno</span></td><td>Establecimiento Campo Nuevo (Potrero)</td><td>Fueron Forestacion Los Montes</td><td><span class="badge b">Actual</span></td><td><span class="ver pp"><svg class="ic" style="left:12.600px;top:14.400px" width="14.200" height="12.620" viewBox="0 0 576 512"><path fill="#5ab01d" d="M288 32c-80.800 0-145.500 36.800-192.600 80.600C48.600 156 17.300 208 2.500 243.700c-3.300 7.900-3.300 16.700 0 24.600C17.300 304 48.600 356 95.400 399.400C142.500 443.200 207.200 480 288 480s145.500-36.800 192.600-80.600c46.800-43.500 78.100-95.400 93-131.100c3.300-7.900 3.300-16.700 0-24.600c-14.900-35.700-46.200-87.700-93-131.100C433.500 68.800 368.800 32 288 32zM144 256a144 144 0 1 1 288 0 144 144 0 1 1-288 0zm144-64c0 35.300-28.700 64-64 64c-7.100 0-13.900-1.200-20.300-3.300c-5.500-1.800-11.900 1.600-11.700 7.400c.3 6.900 1.300 13.800 3.200 20.700c13.700 51.200 66.400 81.600 117.600 67.900s81.600-66.400 67.900-117.600c-11.100-41.500-47.800-69.400-88.600-71.100c-5.800-.2-9.200 6.100-7.400 11.700c2.100 6.400 3.300 13.200 3.300 20.300z"/></svg><span style="position:absolute;left:30.400px;top:0">Ver</span></span></td></tr>
 <tr class="s"><td>23/02/2025</td><td><span class="badge b">Traslado Interno</span></td><td>Establecimiento Grutas del Palacio</td><td>TRASLADO - GUÍA DE PROPIEDAD Y TRÁNSITO</td><td><span class="badge c">Histórico</span></td><td><span class="ver pp"><svg class="ic" style="left:12.600px;top:14.400px" width="14.200" height="12.620" viewBox="0 0 576 512"><path fill="#5ab01d" d="M288 32c-80.800 0-145.500 36.800-192.600 80.600C48.600 156 17.300 208 2.500 243.700c-3.300 7.900-3.300 16.700 0 24.600C17.300 304 48.600 356 95.400 399.400C142.500 443.200 207.200 480 288 480s145.500-36.800 192.600-80.600c46.800-43.500 78.100-95.400 93-131.100c3.300-7.900 3.300-16.700 0-24.600c-14.900-35.700-46.200-87.700-93-131.100C433.500 68.800 368.800 32 288 32zM144 256a144 144 0 1 1 288 0 144 144 0 1 1-288 0zm144-64c0 35.300-28.700 64-64 64c-7.100 0-13.900-1.200-20.300-3.300c-5.500-1.800-11.900 1.600-11.700 7.400c.3 6.900 1.300 13.800 3.200 20.700c13.700 51.200 66.400 81.600 117.600 67.900s81.600-66.400 67.900-117.600c-11.100-41.500-47.800-69.400-88.600-71.100c-5.800-.2-9.200 6.100-7.400 11.700c2.100 6.400 3.300 13.200 3.300 20.300z"/></svg><span style="position:absolute;left:30.400px;top:0">Ver</span></span></td></tr>
 <tr><td>21/06/2023</td><td><span class="badge g">Interno</span></td><td>Establecimiento Colonia Rosell y Rius</td><td>REGISTRO - REGISTRO ELECTRONICO WEB</td><td><span class="badge c">Histórico</span></td><td><span class="ver pp"><svg class="ic" style="left:12.600px;top:14.400px" width="14.200" height="12.620" viewBox="0 0 576 512"><path fill="#5ab01d" d="M288 32c-80.800 0-145.500 36.800-192.600 80.600C48.600 156 17.300 208 2.500 243.700c-3.300 7.900-3.300 16.700 0 24.600C17.300 304 48.600 356 95.400 399.400C142.500 443.200 207.200 480 288 480s145.500-36.800 192.600-80.600c46.800-43.500 78.100-95.400 93-131.100c3.300-7.900 3.300-16.700 0-24.600c-14.900-35.700-46.200-87.700-93-131.100C433.500 68.800 368.800 32 288 32zM144 256a144 144 0 1 1 288 0 144 144 0 1 1-288 0zm144-64c0 35.300-28.700 64-64 64c-7.100 0-13.900-1.200-20.300-3.300c-5.500-1.800-11.900 1.600-11.700 7.400c.3 6.900 1.300 13.800 3.200 20.700c13.700 51.200 66.400 81.600 117.600 67.900s81.600-66.400 67.900-117.600c-11.100-41.500-47.800-69.400-88.600-71.100c-5.800-.2-9.200 6.100-7.400 11.700c2.100 6.400 3.300 13.200 3.300 20.300z"/></svg><span style="position:absolute;left:30.400px;top:0">Ver</span></span></td></tr>
</table>
</body>
</html>
